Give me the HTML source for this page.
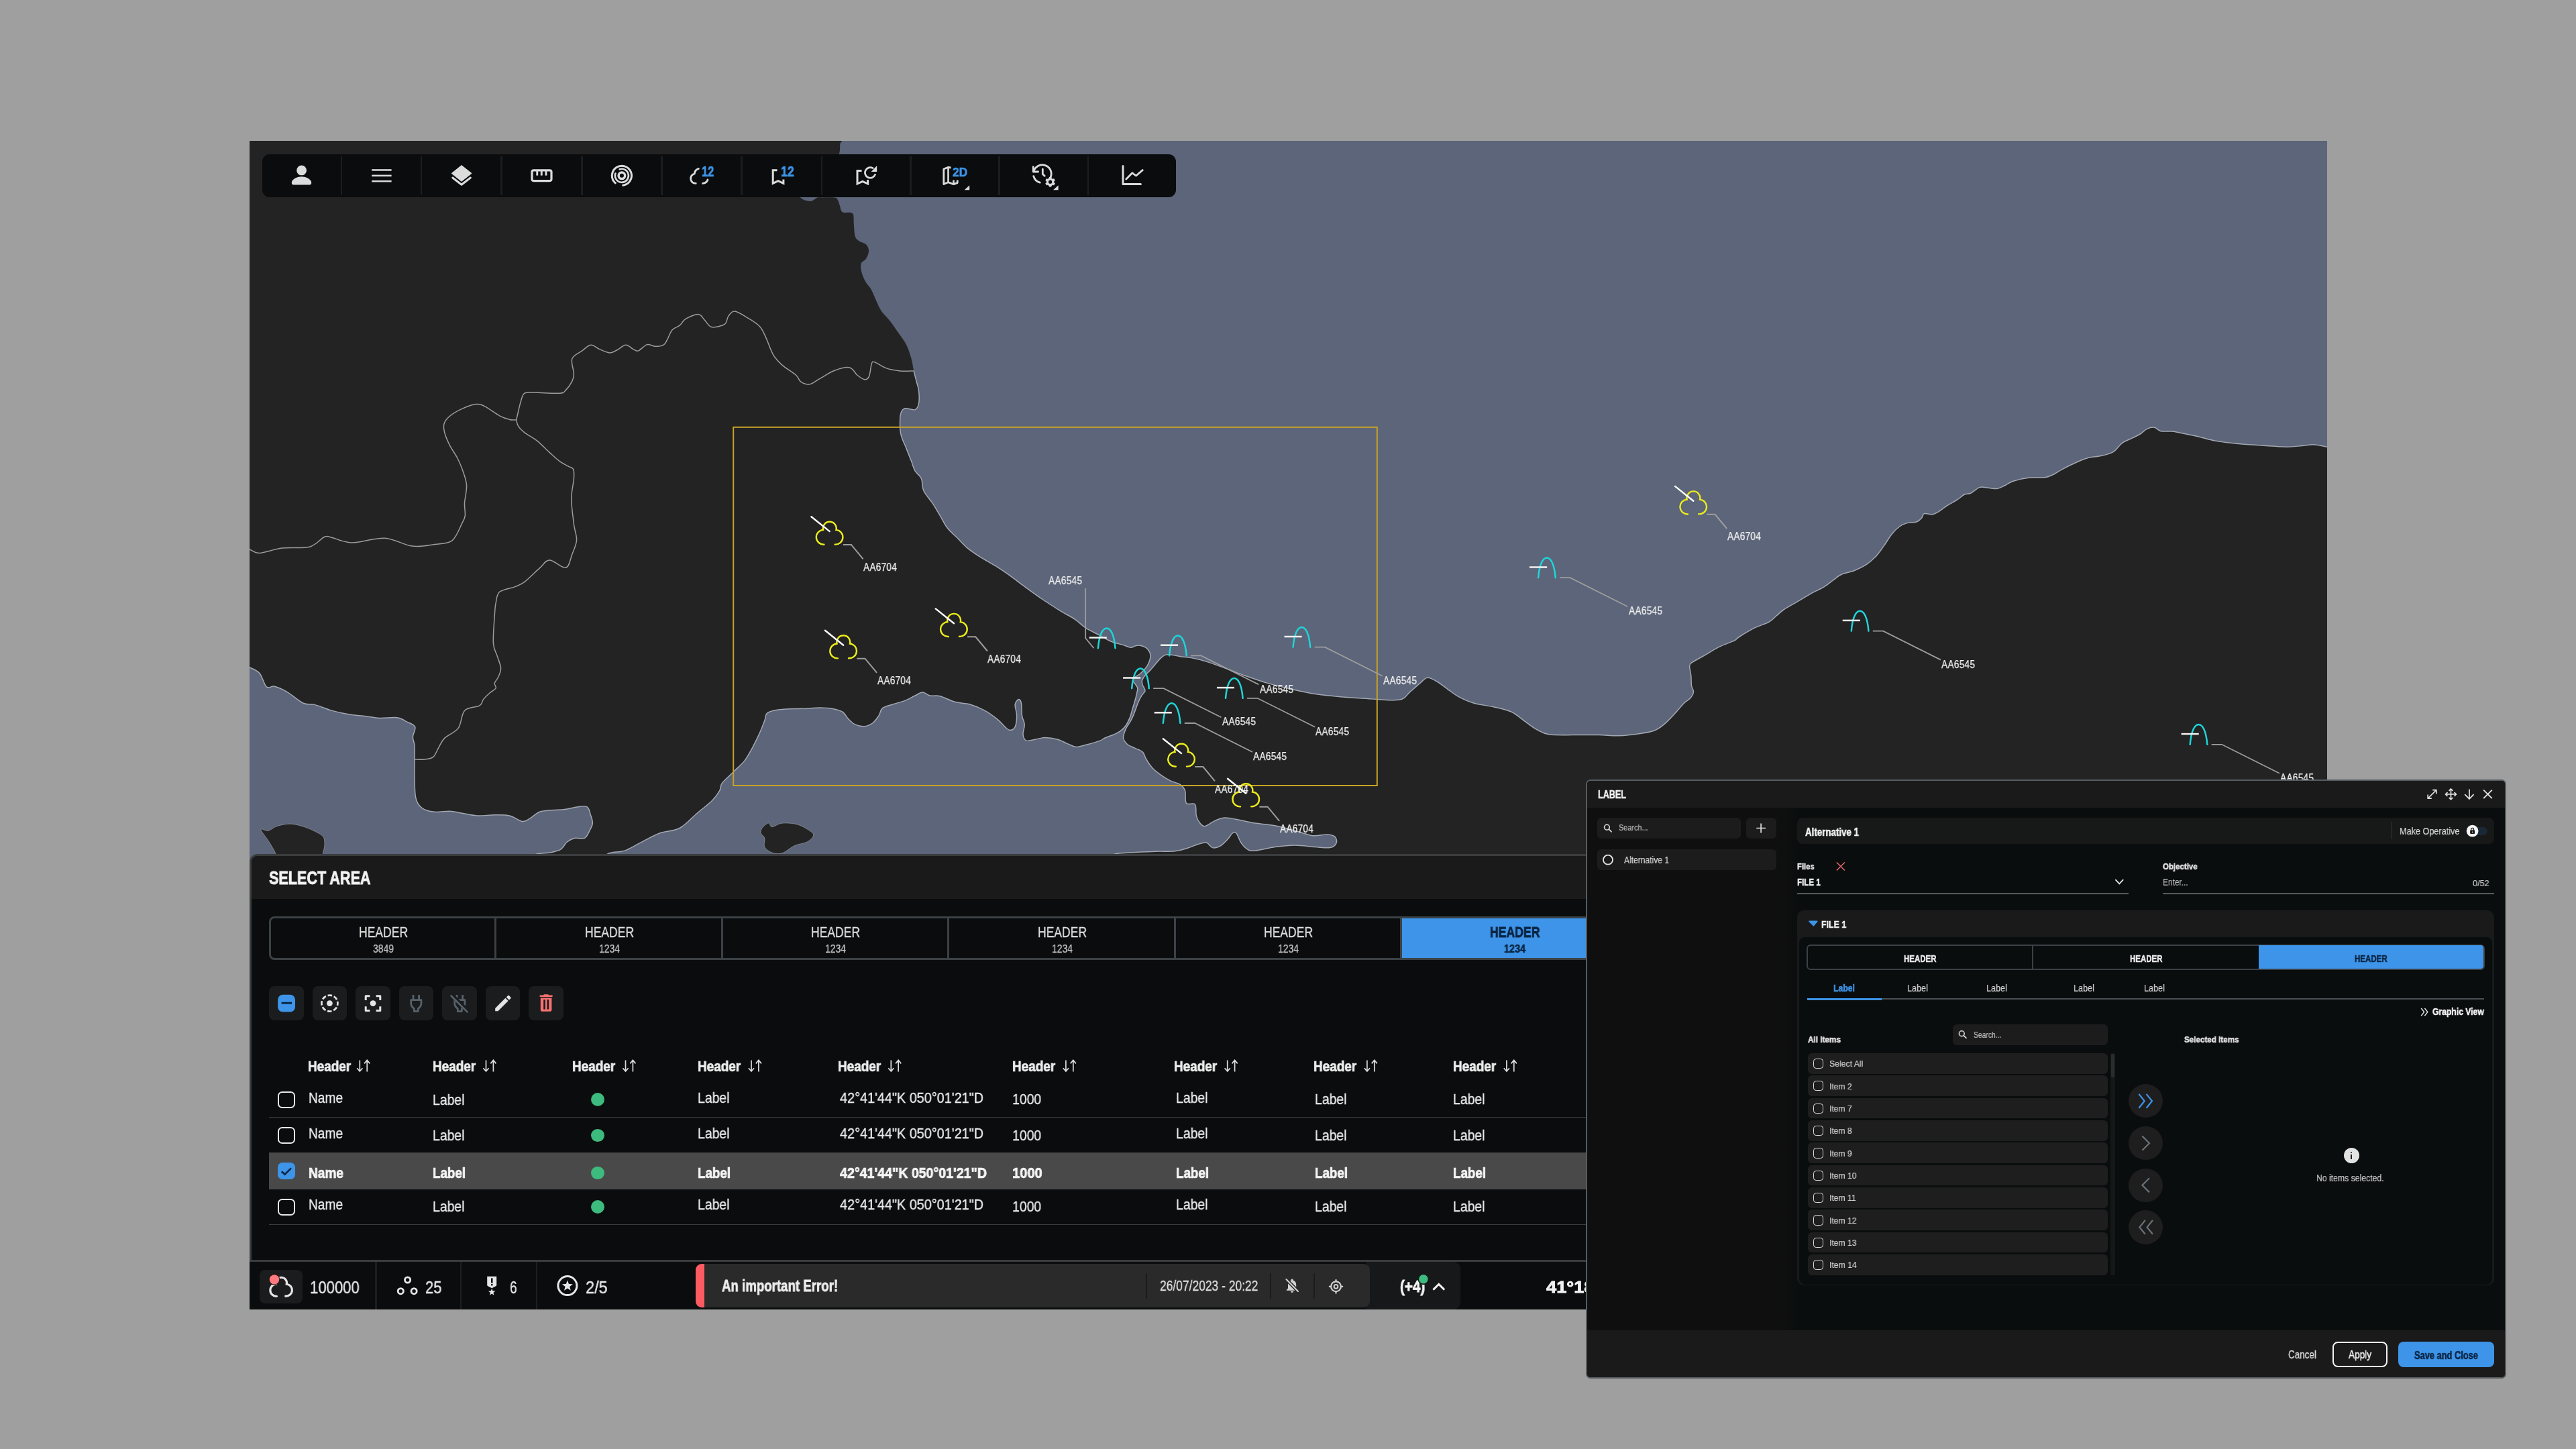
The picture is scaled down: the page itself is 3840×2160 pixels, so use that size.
<!DOCTYPE html>
<html><head><meta charset="utf-8"><title>Select Area</title>
<style>
html,body{margin:0;padding:0;}
body{width:3840px;height:2160px;background:#9f9f9f;position:relative;overflow:hidden;
font-family:"Liberation Sans",sans-serif;}
.b{position:absolute;box-sizing:border-box;display:block;}
.t{position:absolute;white-space:nowrap;transform-origin:0 50%;display:block;will-change:transform;}
#frame{position:absolute;left:372px;top:210px;width:3097px;height:1741.5px;overflow:hidden;background:#232323;}
#frame>.in{position:absolute;left:-372px;top:-210px;width:3840px;height:2160px;}
</style></head><body>
<div id="frame"><div class="in">
<svg class="b" style="left:372.0px;top:210.0px;" width="3097.0" height="1741.5" viewBox="372 210 3097 1741.5"><path d="M1261.5,207.0C1260.1,208.0 1254.7,209.4 1252.9,213.0C1251.2,216.6 1253.1,221.1 1251.1,228.6C1249.1,236.2 1248.3,249.8 1241.0,258.5C1233.7,267.1 1215.8,275.7 1207.5,280.8C1199.1,285.9 1192.8,286.5 1190.7,289.0C1188.6,291.5 1192.9,294.0 1194.8,295.7C1196.6,297.4 1199.4,298.4 1201.9,299.1C1204.3,299.8 1207.1,300.2 1209.3,299.8C1211.5,299.5 1213.4,297.7 1214.9,296.8C1216.5,296.0 1216.8,295.0 1218.6,294.6C1220.5,294.2 1221.9,294.4 1226.1,294.4C1230.3,294.4 1240.2,294.0 1244.0,294.6C1247.8,295.2 1247.5,296.0 1248.8,298.0C1250.1,299.9 1250.6,303.1 1251.8,306.2C1253.0,309.2 1252.7,314.2 1255.9,316.2C1259.1,318.2 1268.0,315.3 1270.8,318.1C1273.6,320.9 1272.1,327.4 1272.7,333.0C1273.3,338.6 1273.3,347.3 1274.5,351.6C1275.8,356.0 1277.3,356.9 1280.1,359.1C1282.9,361.3 1288.8,362.2 1291.3,364.7C1293.8,367.2 1295.0,370.6 1295.0,374.0C1295.0,377.4 1293.2,382.1 1291.3,385.2C1289.5,388.3 1285.1,389.5 1283.9,392.6C1282.6,395.7 1282.9,399.5 1283.9,403.8C1284.8,408.2 1287.0,414.1 1289.5,418.7C1291.9,423.4 1296.0,426.8 1298.8,431.8C1301.6,436.7 1303.7,443.3 1306.2,448.5C1308.7,453.8 1310.3,458.5 1313.7,463.4C1317.1,468.4 1322.4,472.8 1326.7,478.4C1331.1,483.9 1335.7,491.1 1339.8,497.0C1343.8,502.9 1347.8,507.6 1351.0,513.8C1354.1,520.0 1356.5,527.7 1358.4,534.3C1360.3,540.8 1360.9,547.3 1362.1,552.9C1363.4,558.5 1364.6,562.8 1365.9,567.8C1367.1,572.8 1369.0,577.1 1369.6,582.7C1370.2,588.3 1370.5,596.7 1369.6,601.4C1368.7,606.0 1367.4,609.4 1364.0,610.7C1360.6,611.9 1352.6,607.9 1349.1,608.8C1345.5,609.7 1344.0,611.9 1342.8,616.3C1341.5,620.6 1341.5,629.3 1341.6,634.9C1341.8,640.5 1341.9,644.2 1343.5,649.8C1345.0,655.4 1348.5,662.2 1351.0,668.4C1353.4,674.7 1356.2,681.5 1358.4,687.1C1360.6,692.7 1361.5,697.6 1364.0,702.0C1366.5,706.3 1371.1,708.2 1373.3,713.2C1375.5,718.1 1374.2,725.7 1377.0,731.8C1379.8,738.0 1386.0,743.9 1390.1,750.1C1394.1,756.2 1397.5,762.4 1401.3,768.6C1405.0,774.8 1408.1,781.7 1412.4,787.3C1416.8,792.9 1422.4,797.2 1427.4,802.2C1432.3,807.1 1436.7,812.4 1442.3,817.1C1447.9,821.7 1454.1,825.8 1460.9,830.1C1467.7,834.5 1475.8,838.5 1483.3,843.2C1490.7,847.8 1498.2,852.8 1505.6,858.1C1513.1,863.4 1519.9,869.0 1528.0,874.9C1536.1,880.8 1545.4,887.6 1554.1,893.5C1562.8,899.4 1572.1,905.3 1580.2,910.3C1588.2,915.2 1596.1,919.0 1602.5,923.3C1608.9,927.6 1612.8,932.4 1618.6,936.1C1624.4,939.9 1631.1,942.8 1637.3,946.1C1643.5,949.4 1649.7,953.4 1655.9,956.0C1662.1,958.6 1669.6,960.1 1674.5,961.6C1679.5,963.2 1682.8,965.1 1685.7,965.3C1688.6,965.5 1689.6,963.4 1691.9,962.9C1694.2,962.3 1696.7,961.8 1699.4,962.2C1702.1,962.7 1705.7,963.7 1708.1,965.3C1710.5,967.0 1712.5,969.8 1713.7,972.2C1714.8,974.6 1715.2,976.7 1714.9,979.6C1714.6,982.5 1713.1,986.7 1711.8,989.6C1710.5,992.5 1708.9,994.5 1706.8,997.0C1704.8,999.5 1701.9,1002.4 1699.4,1004.5C1696.9,1006.5 1693.7,1007.8 1691.9,1009.4C1690.2,1011.1 1688.8,1012.8 1688.8,1014.4C1688.8,1016.1 1690.8,1017.5 1691.9,1019.4C1693.1,1021.2 1695.2,1023.1 1695.7,1025.6C1696.1,1028.1 1695.0,1031.2 1694.4,1034.3C1693.8,1037.4 1693.0,1040.5 1691.9,1044.2C1690.9,1048.0 1689.4,1052.5 1688.2,1056.6C1687.0,1060.8 1686.1,1064.9 1684.5,1069.1C1682.8,1073.2 1680.7,1078.0 1678.3,1081.5C1675.8,1085.0 1672.7,1087.9 1669.6,1090.2C1666.5,1092.5 1663.4,1093.5 1659.6,1095.2C1655.9,1096.8 1650.5,1098.5 1647.2,1100.0C1643.9,1101.5 1644.1,1102.5 1639.8,1104.1C1635.5,1105.7 1627.1,1108.1 1621.2,1109.7C1615.3,1111.2 1609.4,1113.6 1604.4,1113.4C1599.4,1113.2 1596.0,1110.4 1591.4,1108.6C1586.7,1106.7 1582.0,1103.7 1576.4,1102.2C1570.9,1100.7 1563.4,1099.6 1557.8,1099.6C1552.2,1099.6 1547.6,1101.5 1542.9,1102.2C1538.2,1103.0 1532.8,1105.3 1529.9,1104.1C1526.9,1102.8 1525.4,1098.8 1525.0,1094.8C1524.6,1090.7 1527.5,1084.5 1527.2,1079.9C1527.0,1075.2 1524.3,1072.1 1523.5,1066.8C1522.7,1061.5 1523.2,1052.2 1522.4,1048.2C1521.6,1044.1 1520.2,1042.3 1518.7,1042.6C1517.1,1042.9 1513.6,1046.0 1513.1,1050.0C1512.6,1054.1 1515.7,1061.2 1515.7,1066.8C1515.7,1072.4 1514.8,1080.0 1513.1,1083.6C1511.4,1087.2 1508.1,1088.4 1505.6,1088.4C1503.1,1088.4 1501.3,1086.3 1498.2,1083.6C1495.1,1080.9 1492.0,1076.4 1487.0,1072.4C1482.0,1068.4 1475.2,1063.1 1468.4,1059.4C1461.5,1055.6 1453.4,1052.2 1446.0,1050.0C1438.5,1047.9 1431.1,1048.4 1423.6,1046.3C1416.2,1044.3 1407.5,1039.3 1401.3,1037.7C1395.1,1036.2 1390.7,1037.9 1386.4,1037.0C1382.0,1036.1 1378.9,1032.1 1375.2,1032.1C1371.4,1032.1 1368.3,1034.9 1364.0,1037.0C1359.6,1039.0 1354.7,1042.3 1349.1,1044.4C1343.5,1046.6 1336.0,1048.2 1330.5,1050.0C1324.9,1051.9 1319.0,1052.8 1315.5,1055.6C1312.1,1058.4 1312.4,1063.1 1310.0,1066.8C1307.5,1070.5 1304.4,1075.3 1300.6,1078.0C1296.9,1080.7 1291.9,1082.5 1287.6,1082.8C1283.2,1083.1 1278.3,1081.6 1274.5,1079.9C1270.8,1078.1 1268.3,1075.5 1265.2,1072.4C1262.1,1069.3 1259.9,1063.9 1255.9,1061.2C1251.9,1058.5 1246.6,1057.4 1241.0,1056.4C1235.4,1055.3 1229.2,1054.9 1222.4,1054.9C1215.5,1054.9 1205.1,1056.1 1200.0,1056.4C1194.9,1056.6 1198.9,1056.1 1192.0,1056.4C1185.0,1056.7 1166.5,1057.1 1158.4,1058.2C1150.4,1059.4 1146.6,1060.4 1143.5,1063.1C1140.4,1065.8 1141.7,1069.3 1139.8,1074.3C1137.9,1079.2 1135.4,1086.1 1132.3,1092.9C1129.2,1099.7 1124.9,1108.4 1121.2,1115.3C1117.4,1122.1 1114.6,1128.0 1110.0,1133.9C1105.3,1139.8 1098.8,1145.1 1093.2,1150.7C1087.6,1156.3 1079.9,1162.8 1076.4,1167.4C1073.0,1172.1 1075.2,1174.3 1072.7,1178.6C1070.2,1183.0 1067.1,1187.9 1061.5,1193.5C1055.9,1199.1 1047.2,1205.3 1039.2,1212.2C1031.1,1219.0 1022.4,1229.6 1013.1,1234.5C1003.8,1239.5 993.2,1238.3 983.3,1242.0C973.3,1245.7 962.1,1252.5 953.4,1256.9C944.7,1261.2 938.5,1265.6 931.1,1268.1C923.6,1270.6 914.9,1269.6 908.7,1271.8C902.5,1274.0 896.3,1279.6 893.8,1281.1 L893.8,1320 L1647.3,1320 L1647.3,1281.1C1649.7,1279.8 1656.0,1274.6 1662.2,1272.9C1668.4,1271.2 1674.6,1271.7 1684.5,1271.1C1694.5,1270.4 1710.6,1269.6 1721.8,1269.2C1733.0,1268.8 1743.5,1269.6 1751.6,1268.8C1759.7,1268.0 1764.7,1266.0 1770.3,1264.3C1775.8,1262.7 1780.5,1260.1 1785.2,1258.8C1789.8,1257.4 1794.5,1255.3 1798.2,1256.1C1801.9,1257.0 1804.1,1262.7 1807.5,1263.6C1810.9,1264.5 1815.0,1263.4 1818.7,1261.4C1822.4,1259.3 1826.8,1254.5 1829.9,1251.3C1833.0,1248.1 1835.2,1243.5 1837.3,1242.0C1839.5,1240.4 1840.8,1239.5 1842.9,1242.0C1845.1,1244.5 1847.6,1252.9 1850.4,1256.9C1853.2,1260.9 1856.3,1264.3 1859.7,1266.2C1863.1,1268.1 1864.1,1268.7 1870.9,1268.1C1877.7,1267.5 1890.8,1263.9 1900.7,1262.5C1910.6,1261.1 1920.6,1259.9 1930.5,1259.9C1940.5,1259.9 1951.6,1261.9 1960.3,1262.5C1969.0,1263.1 1977.4,1264.5 1982.7,1263.6C1988.0,1262.7 1990.8,1259.6 1992.0,1256.9C1993.3,1254.2 1992.3,1249.8 1990.2,1247.6C1988.0,1245.4 1984.6,1244.2 1979.0,1243.9C1973.4,1243.5 1964.7,1246.6 1956.6,1245.7C1948.5,1244.8 1939.8,1240.7 1930.5,1238.3C1921.2,1235.8 1910.6,1232.7 1900.7,1230.8C1890.8,1228.9 1879.6,1228.4 1870.9,1227.1C1862.2,1225.7 1856.0,1224.0 1848.5,1222.6C1841.1,1221.2 1832.4,1218.8 1826.2,1218.9C1820.0,1219.0 1816.2,1221.2 1811.3,1223.4C1806.3,1225.5 1800.1,1230.9 1796.3,1231.6C1792.6,1232.2 1791.1,1229.7 1788.9,1227.1C1786.7,1224.5 1784.5,1220.6 1783.3,1215.9C1782.1,1211.2 1783.9,1202.2 1781.4,1199.1C1779.0,1196.0 1770.9,1200.7 1768.4,1197.3C1765.9,1193.8 1768.1,1183.3 1766.5,1178.6C1765.0,1174.0 1762.8,1171.8 1759.1,1169.3C1755.3,1166.8 1749.1,1166.2 1744.2,1163.7C1739.2,1161.2 1733.6,1157.5 1729.3,1154.4C1724.9,1151.3 1721.5,1148.8 1718.1,1145.1C1714.7,1141.4 1711.2,1136.1 1708.8,1132.0C1706.3,1128.0 1706.0,1123.6 1703.2,1120.9C1700.4,1118.1 1695.7,1117.1 1692.0,1115.3C1688.3,1113.4 1683.7,1112.2 1680.8,1109.7C1677.9,1107.1 1675.0,1103.9 1674.5,1100.0C1674.1,1096.1 1676.6,1090.4 1678.3,1086.5C1679.9,1082.5 1682.6,1079.8 1684.5,1076.5C1686.3,1073.2 1688.0,1069.9 1689.4,1066.6C1690.9,1063.3 1691.9,1060.0 1693.2,1056.6C1694.4,1053.3 1695.4,1050.0 1696.9,1046.7C1698.3,1043.4 1700.2,1039.5 1701.9,1036.8C1703.5,1034.1 1706.2,1032.4 1706.8,1030.6C1707.5,1028.7 1706.2,1027.2 1705.6,1025.6C1705.0,1023.9 1703.6,1022.5 1703.1,1020.6C1702.6,1018.8 1701.9,1016.7 1702.5,1014.4C1703.1,1012.1 1704.9,1009.4 1706.8,1007.0C1708.8,1004.5 1711.8,1002.2 1714.3,999.5C1716.8,996.8 1719.3,993.7 1721.7,990.8C1724.2,987.9 1726.9,984.4 1729.2,982.1C1731.5,979.8 1733.1,978.2 1735.4,977.1C1737.7,976.1 1738.5,975.3 1742.9,975.7C1747.2,976.0 1756.3,978.2 1761.5,979.0C1766.7,979.8 1768.2,979.2 1774.0,980.3C1779.8,981.4 1787.7,982.9 1796.3,985.6C1805.0,988.2 1816.2,992.4 1826.2,996.0C1836.1,999.6 1845.4,1003.4 1856.0,1007.2C1866.5,1010.9 1877.7,1014.9 1889.5,1018.4C1901.3,1021.8 1914.4,1024.9 1926.8,1027.7C1939.2,1030.5 1951.6,1033.3 1964.1,1035.1C1976.5,1037.0 1988.9,1037.8 2001.3,1038.9C2013.8,1039.9 2024.6,1040.7 2038.6,1041.5C2052.6,1042.2 2074.6,1045.0 2085.2,1043.3C2095.8,1041.7 2096.7,1035.6 2102.0,1031.4C2107.3,1027.2 2112.5,1021.9 2116.9,1018.4C2121.2,1014.8 2123.7,1010.5 2128.1,1010.2C2132.4,1009.8 2137.7,1013.4 2143.0,1016.5C2148.3,1019.6 2154.7,1025.1 2160.0,1028.9C2165.3,1032.6 2168.7,1035.7 2174.9,1038.9C2181.1,1042.2 2188.6,1045.8 2197.3,1048.3C2206.0,1050.7 2217.8,1051.7 2227.1,1053.9C2236.4,1056.0 2245.7,1057.9 2253.2,1061.3C2260.6,1064.7 2265.6,1070.0 2271.8,1074.3C2278.0,1078.7 2284.2,1084.0 2290.5,1087.4C2296.7,1090.8 2299.8,1093.5 2309.1,1094.8C2318.4,1096.2 2333.9,1095.5 2346.4,1095.6C2358.8,1095.7 2372.4,1095.4 2383.6,1095.6C2394.8,1095.8 2403.5,1097.0 2413.4,1096.7C2423.4,1096.4 2434.6,1095.0 2443.3,1093.7C2452.0,1092.5 2459.4,1091.6 2465.6,1089.3C2471.8,1087.0 2475.6,1084.0 2480.5,1079.9C2485.5,1075.9 2490.5,1070.3 2495.4,1065.0C2500.4,1059.8 2506.3,1052.3 2510.4,1048.3C2514.4,1044.2 2517.3,1043.6 2519.7,1040.8C2522.0,1038.0 2524.2,1034.6 2524.5,1031.5C2524.8,1028.4 2522.2,1026.2 2521.5,1022.2C2520.9,1018.1 2521.3,1012.2 2520.8,1007.3C2520.3,1002.3 2518.1,995.8 2518.6,992.4C2519.0,988.9 2519.8,989.2 2523.4,986.8C2527.0,984.3 2533.6,981.2 2540.2,977.4C2546.7,973.7 2555.1,968.1 2562.5,964.4C2570.0,960.7 2579.9,957.6 2584.9,955.1C2589.9,952.6 2587.4,952.6 2592.4,949.5C2597.3,946.4 2607.3,940.2 2614.7,936.4C2622.2,932.7 2631.5,930.2 2637.1,927.1C2642.7,924.0 2644.5,920.9 2648.3,917.8C2652.0,914.7 2653.9,912.2 2659.4,908.5C2665.0,904.8 2675.0,899.5 2681.8,895.4C2688.6,891.4 2694.2,887.7 2700.4,884.3C2706.7,880.8 2713.5,878.4 2719.1,874.9C2724.7,871.5 2729.6,866.9 2734.0,863.8C2738.3,860.7 2740.2,858.5 2745.2,856.3C2750.1,854.1 2757.6,853.2 2763.8,850.7C2770.0,848.2 2776.8,845.1 2782.4,841.4C2788.0,837.7 2793.0,833.0 2797.3,828.4C2801.7,823.7 2804.8,818.7 2808.5,813.4C2812.3,808.2 2816.0,801.3 2819.7,796.7C2823.4,792.0 2827.2,788.3 2830.9,785.5C2834.6,782.7 2837.7,781.1 2842.1,779.9C2846.4,778.7 2853.3,779.3 2857.0,778.0C2860.7,776.8 2862.6,774.5 2864.4,772.4C2866.3,770.4 2865.6,766.7 2868.2,765.7C2870.8,764.8 2876.8,767.1 2880.0,766.9C2883.2,766.6 2883.7,766.4 2887.5,764.2C2891.2,762.1 2897.4,757.0 2902.4,753.8C2907.3,750.6 2912.9,748.0 2917.3,745.2C2921.6,742.4 2925.0,738.7 2928.5,737.0C2931.9,735.4 2934.0,736.9 2937.8,735.2C2941.5,733.4 2946.8,728.0 2950.8,726.6C2954.9,725.2 2957.6,726.7 2962.0,727.0C2966.3,727.3 2972.6,729.0 2976.9,728.5C2981.3,728.0 2984.1,725.9 2988.1,724.0C2992.1,722.1 2994.9,719.3 3001.1,717.3C3007.3,715.3 3017.6,713.0 3025.4,712.1C3033.1,711.1 3042.1,712.3 3047.7,711.7C3053.3,711.1 3054.6,710.3 3058.9,708.3C3063.3,706.4 3068.2,702.8 3073.8,699.8C3079.4,696.8 3086.2,693.2 3092.4,690.5C3098.7,687.7 3104.3,684.9 3111.1,683.0C3117.9,681.1 3126.9,680.8 3133.4,679.3C3140.0,677.7 3145.3,676.8 3150.2,673.7C3155.2,670.6 3158.6,664.1 3163.3,660.6C3167.9,657.2 3173.5,655.5 3178.2,653.2C3182.8,650.8 3187.5,648.8 3191.2,646.5C3194.9,644.2 3197.1,640.9 3200.5,639.4C3204.0,637.8 3208.3,636.6 3211.7,637.2C3215.1,637.7 3216.7,641.7 3221.0,642.7C3225.4,643.7 3231.9,642.5 3237.8,643.1C3243.7,643.7 3249.6,645.1 3256.4,646.5C3263.3,647.8 3271.4,649.6 3278.8,651.3C3286.3,653.1 3293.1,655.4 3301.2,656.9C3309.2,658.5 3316.7,659.5 3327.3,660.6C3337.8,661.8 3350.9,662.7 3364.5,663.6C3378.2,664.5 3398.1,666.1 3409.3,666.2C3420.4,666.3 3424.8,664.9 3431.6,664.4C3438.5,663.8 3444.0,662.6 3450.3,662.9C3456.5,663.2 3463.9,665.4 3468.9,666.2C3473.9,667.1 3478.2,667.8 3480.1,668.1 L3490,668.1 L3490,190 L1261.5,190 Z" fill="#5c6579"/><path d="M364.5,992.3C365.8,992.7 368.3,993.0 372.0,994.9C375.7,996.7 382.7,998.6 386.9,1003.4C391.1,1008.3 393.6,1020.7 397.3,1023.9C401.1,1027.2 404.2,1022.0 409.3,1023.2C414.4,1024.4 420.8,1027.2 427.9,1031.4C435.1,1035.6 445.3,1045.0 452.1,1048.2C459.0,1051.3 461.8,1048.5 468.9,1050.4C476.1,1052.3 486.3,1056.9 495.0,1059.4C503.7,1061.8 512.4,1063.5 521.1,1064.9C529.8,1066.4 539.7,1067.0 547.2,1067.9C554.6,1068.9 558.4,1070.2 565.8,1070.5C573.3,1070.8 585.1,1068.9 591.9,1069.8C598.7,1070.7 602.3,1073.8 606.8,1076.1C611.3,1078.4 617.3,1079.9 618.7,1083.6C620.2,1087.3 615.5,1093.8 615.4,1098.5C615.3,1103.1 617.6,1105.9 618.0,1111.5C618.4,1117.1 618.0,1124.0 618.0,1132.0C618.0,1140.1 617.7,1150.4 618.0,1160.0C618.3,1169.6 618.0,1182.4 619.9,1189.8C621.7,1197.3 624.5,1201.3 629.2,1204.7C633.8,1208.1 641.0,1209.6 647.8,1210.3C654.6,1211.1 663.3,1208.9 670.2,1209.2C677.0,1209.5 682.0,1211.1 688.8,1212.2C695.6,1213.3 703.1,1215.5 711.2,1215.9C719.2,1216.3 729.2,1214.8 737.3,1214.8C745.3,1214.8 752.8,1214.3 759.6,1215.9C766.5,1217.5 773.3,1223.7 778.3,1224.5C783.2,1225.2 785.1,1222.7 789.4,1220.4C793.8,1218.0 798.8,1212.4 804.4,1210.3C809.9,1208.2 816.8,1208.3 823.0,1207.7C829.2,1207.1 835.4,1207.4 841.6,1206.6C847.8,1205.8 854.7,1203.5 860.3,1202.9C865.9,1202.2 871.8,1200.7 875.2,1202.9C878.6,1205.0 879.4,1211.9 880.8,1215.9C882.1,1219.9 883.7,1223.4 883.4,1227.1C883.1,1230.8 880.9,1234.5 878.9,1238.3C876.9,1242.0 875.2,1247.6 871.4,1249.4C867.7,1251.3 860.9,1248.5 856.5,1249.4C852.2,1250.4 848.8,1252.2 845.4,1255.0C841.9,1257.8 840.4,1263.5 836.0,1266.2C831.7,1268.9 825.2,1269.9 819.3,1271.1C813.4,1272.2 806.8,1271.2 800.6,1272.9C794.4,1274.6 785.1,1279.8 782.0,1281.1 L782.0,1320 L350,1320 Z" fill="#5c6579"/><path d="M388.8,1236.4C388.8,1233.9 395.9,1239.1 400.0,1238.3C404.0,1237.5 407.7,1233.2 413.0,1231.6C418.3,1229.9 425.4,1228.2 431.6,1228.2C437.8,1228.2 444.1,1229.7 450.3,1231.6C456.5,1233.4 463.6,1236.3 468.9,1239.0C474.2,1241.7 479.5,1244.0 482.0,1247.6C484.4,1251.2 483.9,1256.4 483.8,1260.6C483.7,1264.8 481.8,1268.6 481.2,1272.9C480.6,1277.3 491.5,1284.4 480.1,1286.7C468.7,1289.0 424.5,1289.0 413.0,1286.7C401.5,1284.4 413.3,1278.5 411.1,1272.9C409.0,1267.3 403.7,1259.3 400.0,1253.2C396.2,1247.1 388.8,1238.9 388.8,1236.4Z" fill="#232323" stroke="#a2a8b3" stroke-width="0.6"/><path d="M1136.1,1234.5C1137.9,1232.0 1142.9,1227.4 1145.4,1227.1C1147.9,1226.8 1147.6,1232.7 1151.0,1232.7C1154.4,1232.7 1159.7,1227.7 1165.9,1227.1C1172.1,1226.5 1181.4,1227.1 1188.3,1228.9C1195.1,1230.8 1202.8,1235.5 1206.9,1238.3C1210.9,1241.1 1213.1,1242.9 1212.5,1245.7C1211.9,1248.5 1207.8,1252.5 1203.2,1255.0C1198.5,1257.5 1190.7,1257.8 1184.5,1260.6C1178.3,1263.4 1171.5,1270.1 1165.9,1271.8C1160.3,1273.5 1155.3,1272.6 1151.0,1271.1C1146.6,1269.5 1141.7,1266.1 1139.8,1262.5C1137.9,1258.9 1140.7,1252.9 1139.8,1249.4C1138.9,1246.0 1134.8,1244.5 1134.2,1242.0C1133.6,1239.5 1134.2,1237.0 1136.1,1234.5Z" fill="#232323" stroke="#a2a8b3" stroke-width="0.6"/><path d="M1362.1,552.9C1362.8,555.4 1364.6,562.8 1365.9,567.8C1367.1,572.8 1369.0,577.1 1369.6,582.7C1370.2,588.3 1370.5,596.7 1369.6,601.4C1368.7,606.0 1367.4,609.4 1364.0,610.7C1360.6,611.9 1352.6,607.9 1349.1,608.8C1345.5,609.7 1344.0,611.9 1342.8,616.3C1341.5,620.6 1341.5,629.3 1341.6,634.9C1341.8,640.5 1341.9,644.2 1343.5,649.8C1345.0,655.4 1348.5,662.2 1351.0,668.4C1353.4,674.7 1356.2,681.5 1358.4,687.1C1360.6,692.7 1361.5,697.6 1364.0,702.0C1366.5,706.3 1371.1,708.2 1373.3,713.2C1375.5,718.1 1374.2,725.7 1377.0,731.8C1379.8,738.0 1386.0,743.9 1390.1,750.1C1394.1,756.2 1397.5,762.4 1401.3,768.6C1405.0,774.8 1408.1,781.7 1412.4,787.3C1416.8,792.9 1422.4,797.2 1427.4,802.2C1432.3,807.1 1436.7,812.4 1442.3,817.1C1447.9,821.7 1454.1,825.8 1460.9,830.1C1467.7,834.5 1475.8,838.5 1483.3,843.2C1490.7,847.8 1498.2,852.8 1505.6,858.1C1513.1,863.4 1519.9,869.0 1528.0,874.9C1536.1,880.8 1545.4,887.6 1554.1,893.5C1562.8,899.4 1572.1,905.3 1580.2,910.3C1588.2,915.2 1596.1,919.0 1602.5,923.3C1608.9,927.6 1612.8,932.4 1618.6,936.1C1624.4,939.9 1631.1,942.8 1637.3,946.1C1643.5,949.4 1649.7,953.4 1655.9,956.0C1662.1,958.6 1669.6,960.1 1674.5,961.6C1679.5,963.2 1682.8,965.1 1685.7,965.3C1688.6,965.5 1689.6,963.4 1691.9,962.9C1694.2,962.3 1696.7,961.8 1699.4,962.2C1702.1,962.7 1705.7,963.7 1708.1,965.3C1710.5,967.0 1712.5,969.8 1713.7,972.2C1714.8,974.6 1715.2,976.7 1714.9,979.6C1714.6,982.5 1713.1,986.7 1711.8,989.6C1710.5,992.5 1708.9,994.5 1706.8,997.0C1704.8,999.5 1701.9,1002.4 1699.4,1004.5C1696.9,1006.5 1693.7,1007.8 1691.9,1009.4C1690.2,1011.1 1688.8,1012.8 1688.8,1014.4C1688.8,1016.1 1690.8,1017.5 1691.9,1019.4C1693.1,1021.2 1695.2,1023.1 1695.7,1025.6C1696.1,1028.1 1695.0,1031.2 1694.4,1034.3C1693.8,1037.4 1693.0,1040.5 1691.9,1044.2C1690.9,1048.0 1689.4,1052.5 1688.2,1056.6C1687.0,1060.8 1686.1,1064.9 1684.5,1069.1C1682.8,1073.2 1680.7,1078.0 1678.3,1081.5C1675.8,1085.0 1672.7,1087.9 1669.6,1090.2C1666.5,1092.5 1663.4,1093.5 1659.6,1095.2C1655.9,1096.8 1650.5,1098.5 1647.2,1100.0C1643.9,1101.5 1644.1,1102.5 1639.8,1104.1C1635.5,1105.7 1627.1,1108.1 1621.2,1109.7C1615.3,1111.2 1609.4,1113.6 1604.4,1113.4C1599.4,1113.2 1596.0,1110.4 1591.4,1108.6C1586.7,1106.7 1582.0,1103.7 1576.4,1102.2C1570.9,1100.7 1563.4,1099.6 1557.8,1099.6C1552.2,1099.6 1547.6,1101.5 1542.9,1102.2C1538.2,1103.0 1532.8,1105.3 1529.9,1104.1C1526.9,1102.8 1525.4,1098.8 1525.0,1094.8C1524.6,1090.7 1527.5,1084.5 1527.2,1079.9C1527.0,1075.2 1524.3,1072.1 1523.5,1066.8C1522.7,1061.5 1523.2,1052.2 1522.4,1048.2C1521.6,1044.1 1520.2,1042.3 1518.7,1042.6C1517.1,1042.9 1513.6,1046.0 1513.1,1050.0C1512.6,1054.1 1515.7,1061.2 1515.7,1066.8C1515.7,1072.4 1514.8,1080.0 1513.1,1083.6C1511.4,1087.2 1508.1,1088.4 1505.6,1088.4C1503.1,1088.4 1501.3,1086.3 1498.2,1083.6C1495.1,1080.9 1492.0,1076.4 1487.0,1072.4C1482.0,1068.4 1475.2,1063.1 1468.4,1059.4C1461.5,1055.6 1453.4,1052.2 1446.0,1050.0C1438.5,1047.9 1431.1,1048.4 1423.6,1046.3C1416.2,1044.3 1407.5,1039.3 1401.3,1037.7C1395.1,1036.2 1390.7,1037.9 1386.4,1037.0C1382.0,1036.1 1378.9,1032.1 1375.2,1032.1C1371.4,1032.1 1368.3,1034.9 1364.0,1037.0C1359.6,1039.0 1354.7,1042.3 1349.1,1044.4C1343.5,1046.6 1336.0,1048.2 1330.5,1050.0C1324.9,1051.9 1319.0,1052.8 1315.5,1055.6C1312.1,1058.4 1312.4,1063.1 1310.0,1066.8C1307.5,1070.5 1304.4,1075.3 1300.6,1078.0C1296.9,1080.7 1291.9,1082.5 1287.6,1082.8C1283.2,1083.1 1278.3,1081.6 1274.5,1079.9C1270.8,1078.1 1268.3,1075.5 1265.2,1072.4C1262.1,1069.3 1259.9,1063.9 1255.9,1061.2C1251.9,1058.5 1246.6,1057.4 1241.0,1056.4C1235.4,1055.3 1229.2,1054.9 1222.4,1054.9C1215.5,1054.9 1205.1,1056.1 1200.0,1056.4C1194.9,1056.6 1198.9,1056.1 1192.0,1056.4C1185.0,1056.7 1166.5,1057.1 1158.4,1058.2C1150.4,1059.4 1146.6,1060.4 1143.5,1063.1C1140.4,1065.8 1141.7,1069.3 1139.8,1074.3C1137.9,1079.2 1135.4,1086.1 1132.3,1092.9C1129.2,1099.7 1124.9,1108.4 1121.2,1115.3C1117.4,1122.1 1114.6,1128.0 1110.0,1133.9C1105.3,1139.8 1098.8,1145.1 1093.2,1150.7C1087.6,1156.3 1079.9,1162.8 1076.4,1167.4C1073.0,1172.1 1075.2,1174.3 1072.7,1178.6C1070.2,1183.0 1067.1,1187.9 1061.5,1193.5C1055.9,1199.1 1047.2,1205.3 1039.2,1212.2C1031.1,1219.0 1022.4,1229.6 1013.1,1234.5C1003.8,1239.5 993.2,1238.3 983.3,1242.0C973.3,1245.7 962.1,1252.5 953.4,1256.9C944.7,1261.2 938.5,1265.6 931.1,1268.1C923.6,1270.6 914.9,1269.6 908.7,1271.8C902.5,1274.0 896.3,1279.6 893.8,1281.1" fill="none" stroke="#a2a8b3" stroke-width="1.5"/><path d="M3480.1,668.1C3478.2,667.8 3473.9,667.1 3468.9,666.2C3463.9,665.4 3456.5,663.2 3450.3,662.9C3444.0,662.6 3438.5,663.8 3431.6,664.4C3424.8,664.9 3420.4,666.3 3409.3,666.2C3398.1,666.1 3378.2,664.5 3364.5,663.6C3350.9,662.7 3337.8,661.8 3327.3,660.6C3316.7,659.5 3309.2,658.5 3301.2,656.9C3293.1,655.4 3286.3,653.1 3278.8,651.3C3271.4,649.6 3263.3,647.8 3256.4,646.5C3249.6,645.1 3243.7,643.7 3237.8,643.1C3231.9,642.5 3225.4,643.7 3221.0,642.7C3216.7,641.7 3215.1,637.7 3211.7,637.2C3208.3,636.6 3204.0,637.8 3200.5,639.4C3197.1,640.9 3194.9,644.2 3191.2,646.5C3187.5,648.8 3182.8,650.8 3178.2,653.2C3173.5,655.5 3167.9,657.2 3163.3,660.6C3158.6,664.1 3155.2,670.6 3150.2,673.7C3145.3,676.8 3140.0,677.7 3133.4,679.3C3126.9,680.8 3117.9,681.1 3111.1,683.0C3104.3,684.9 3098.7,687.7 3092.4,690.5C3086.2,693.2 3079.4,696.8 3073.8,699.8C3068.2,702.8 3063.3,706.4 3058.9,708.3C3054.6,710.3 3053.3,711.1 3047.7,711.7C3042.1,712.3 3033.1,711.1 3025.4,712.1C3017.6,713.0 3007.3,715.3 3001.1,717.3C2994.9,719.3 2992.1,722.1 2988.1,724.0C2984.1,725.9 2981.3,728.0 2976.9,728.5C2972.6,729.0 2966.3,727.3 2962.0,727.0C2957.6,726.7 2954.9,725.2 2950.8,726.6C2946.8,728.0 2941.5,733.4 2937.8,735.2C2934.0,736.9 2931.9,735.4 2928.5,737.0C2925.0,738.7 2921.6,742.4 2917.3,745.2C2912.9,748.0 2907.3,750.6 2902.4,753.8C2897.4,757.0 2891.2,762.1 2887.5,764.2C2883.7,766.4 2883.2,766.6 2880.0,766.9C2876.8,767.1 2870.8,764.8 2868.2,765.7C2865.6,766.7 2866.3,770.4 2864.4,772.4C2862.6,774.5 2860.7,776.8 2857.0,778.0C2853.3,779.3 2846.4,778.7 2842.1,779.9C2837.7,781.1 2834.6,782.7 2830.9,785.5C2827.2,788.3 2823.4,792.0 2819.7,796.7C2816.0,801.3 2812.3,808.2 2808.5,813.4C2804.8,818.7 2801.7,823.7 2797.3,828.4C2793.0,833.0 2788.0,837.7 2782.4,841.4C2776.8,845.1 2770.0,848.2 2763.8,850.7C2757.6,853.2 2750.1,854.1 2745.2,856.3C2740.2,858.5 2738.3,860.7 2734.0,863.8C2729.6,866.9 2724.7,871.5 2719.1,874.9C2713.5,878.4 2706.7,880.8 2700.4,884.3C2694.2,887.7 2688.6,891.4 2681.8,895.4C2675.0,899.5 2665.0,904.8 2659.4,908.5C2653.9,912.2 2652.0,914.7 2648.3,917.8C2644.5,920.9 2642.7,924.0 2637.1,927.1C2631.5,930.2 2622.2,932.7 2614.7,936.4C2607.3,940.2 2597.3,946.4 2592.4,949.5C2587.4,952.6 2589.9,952.6 2584.9,955.1C2579.9,957.6 2570.0,960.7 2562.5,964.4C2555.1,968.1 2546.7,973.7 2540.2,977.4C2533.6,981.2 2527.0,984.3 2523.4,986.8C2519.8,989.2 2519.0,988.9 2518.6,992.4C2518.1,995.8 2520.3,1002.3 2520.8,1007.3C2521.3,1012.2 2520.9,1018.1 2521.5,1022.2C2522.2,1026.2 2524.8,1028.4 2524.5,1031.5C2524.2,1034.6 2522.0,1038.0 2519.7,1040.8C2517.3,1043.6 2514.4,1044.2 2510.4,1048.3C2506.3,1052.3 2500.4,1059.8 2495.4,1065.0C2490.5,1070.3 2485.5,1075.9 2480.5,1079.9C2475.6,1084.0 2471.8,1087.0 2465.6,1089.3C2459.4,1091.6 2452.0,1092.5 2443.3,1093.7C2434.6,1095.0 2423.4,1096.4 2413.4,1096.7C2403.5,1097.0 2394.8,1095.8 2383.6,1095.6C2372.4,1095.4 2358.8,1095.7 2346.4,1095.6C2333.9,1095.5 2318.4,1096.2 2309.1,1094.8C2299.8,1093.5 2296.7,1090.8 2290.5,1087.4C2284.2,1084.0 2278.0,1078.7 2271.8,1074.3C2265.6,1070.0 2260.6,1064.7 2253.2,1061.3C2245.7,1057.9 2236.4,1056.0 2227.1,1053.9C2217.8,1051.7 2206.0,1050.7 2197.3,1048.3C2188.6,1045.8 2181.1,1042.2 2174.9,1038.9C2168.7,1035.7 2165.3,1032.6 2160.0,1028.9C2154.7,1025.1 2148.3,1019.6 2143.0,1016.5C2137.7,1013.4 2132.4,1009.8 2128.1,1010.2C2123.7,1010.5 2121.2,1014.8 2116.9,1018.4C2112.5,1021.9 2107.3,1027.2 2102.0,1031.4C2096.7,1035.6 2095.8,1041.7 2085.2,1043.3C2074.6,1045.0 2052.6,1042.2 2038.6,1041.5C2024.6,1040.7 2013.8,1039.9 2001.3,1038.9C1988.9,1037.8 1976.5,1037.0 1964.1,1035.1C1951.6,1033.3 1939.2,1030.5 1926.8,1027.7C1914.4,1024.9 1901.3,1021.8 1889.5,1018.4C1877.7,1014.9 1866.5,1010.9 1856.0,1007.2C1845.4,1003.4 1836.1,999.6 1826.2,996.0C1816.2,992.4 1805.0,988.2 1796.3,985.6C1787.7,982.9 1779.8,981.4 1774.0,980.3C1768.2,979.2 1766.7,979.8 1761.5,979.0C1756.3,978.2 1747.2,976.0 1742.9,975.7C1738.5,975.3 1737.7,976.1 1735.4,977.1C1733.1,978.2 1731.5,979.8 1729.2,982.1C1726.9,984.4 1724.2,987.9 1721.7,990.8C1719.3,993.7 1716.8,996.8 1714.3,999.5C1711.8,1002.2 1708.8,1004.5 1706.8,1007.0C1704.9,1009.4 1703.1,1012.1 1702.5,1014.4C1701.9,1016.7 1702.6,1018.8 1703.1,1020.6C1703.6,1022.5 1705.0,1023.9 1705.6,1025.6C1706.2,1027.2 1707.5,1028.7 1706.8,1030.6C1706.2,1032.4 1703.5,1034.1 1701.9,1036.8C1700.2,1039.5 1698.3,1043.4 1696.9,1046.7C1695.4,1050.0 1694.4,1053.3 1693.2,1056.6C1691.9,1060.0 1690.9,1063.3 1689.4,1066.6C1688.0,1069.9 1686.3,1073.2 1684.5,1076.5C1682.6,1079.8 1679.9,1082.5 1678.3,1086.5C1676.6,1090.4 1674.1,1096.1 1674.5,1100.0C1675.0,1103.9 1677.9,1107.1 1680.8,1109.7C1683.7,1112.2 1688.3,1113.4 1692.0,1115.3C1695.7,1117.1 1700.4,1118.1 1703.2,1120.9C1706.0,1123.6 1706.3,1128.0 1708.8,1132.0C1711.2,1136.1 1714.7,1141.4 1718.1,1145.1C1721.5,1148.8 1724.9,1151.3 1729.3,1154.4C1733.6,1157.5 1739.2,1161.2 1744.2,1163.7C1749.1,1166.2 1755.3,1166.8 1759.1,1169.3C1762.8,1171.8 1765.0,1174.0 1766.5,1178.6C1768.1,1183.3 1765.9,1193.8 1768.4,1197.3C1770.9,1200.7 1779.0,1196.0 1781.4,1199.1C1783.9,1202.2 1782.1,1211.2 1783.3,1215.9C1784.5,1220.6 1786.7,1224.5 1788.9,1227.1C1791.1,1229.7 1792.6,1232.2 1796.3,1231.6C1800.1,1230.9 1806.3,1225.5 1811.3,1223.4C1816.2,1221.2 1820.0,1219.0 1826.2,1218.9C1832.4,1218.8 1841.1,1221.2 1848.5,1222.6C1856.0,1224.0 1862.2,1225.7 1870.9,1227.1C1879.6,1228.4 1890.8,1228.9 1900.7,1230.8C1910.6,1232.7 1921.2,1235.8 1930.5,1238.3C1939.8,1240.7 1948.5,1244.8 1956.6,1245.7C1964.7,1246.6 1973.4,1243.5 1979.0,1243.9C1984.6,1244.2 1988.0,1245.4 1990.2,1247.6C1992.3,1249.8 1993.3,1254.2 1992.0,1256.9C1990.8,1259.6 1988.0,1262.7 1982.7,1263.6C1977.4,1264.5 1969.0,1263.1 1960.3,1262.5C1951.6,1261.9 1940.5,1259.9 1930.5,1259.9C1920.6,1259.9 1910.6,1261.1 1900.7,1262.5C1890.8,1263.9 1877.7,1267.5 1870.9,1268.1C1864.1,1268.7 1863.1,1268.1 1859.7,1266.2C1856.3,1264.3 1853.2,1260.9 1850.4,1256.9C1847.6,1252.9 1845.1,1244.5 1842.9,1242.0C1840.8,1239.5 1839.5,1240.4 1837.3,1242.0C1835.2,1243.5 1833.0,1248.1 1829.9,1251.3C1826.8,1254.5 1822.4,1259.3 1818.7,1261.4C1815.0,1263.4 1810.9,1264.5 1807.5,1263.6C1804.1,1262.7 1801.9,1257.0 1798.2,1256.1C1794.5,1255.3 1789.8,1257.4 1785.2,1258.8C1780.5,1260.1 1775.8,1262.7 1770.3,1264.3C1764.7,1266.0 1759.7,1268.0 1751.6,1268.8C1743.5,1269.6 1733.0,1268.8 1721.8,1269.2C1710.6,1269.6 1694.5,1270.4 1684.5,1271.1C1674.6,1271.7 1668.4,1271.2 1662.2,1272.9C1656.0,1274.6 1649.7,1279.8 1647.3,1281.1" fill="none" stroke="#a2a8b3" stroke-width="1.5"/><path d="M364.5,992.3C365.8,992.7 368.3,993.0 372.0,994.9C375.7,996.7 382.7,998.6 386.9,1003.4C391.1,1008.3 393.6,1020.7 397.3,1023.9C401.1,1027.2 404.2,1022.0 409.3,1023.2C414.4,1024.4 420.8,1027.2 427.9,1031.4C435.1,1035.6 445.3,1045.0 452.1,1048.2C459.0,1051.3 461.8,1048.5 468.9,1050.4C476.1,1052.3 486.3,1056.9 495.0,1059.4C503.7,1061.8 512.4,1063.5 521.1,1064.9C529.8,1066.4 539.7,1067.0 547.2,1067.9C554.6,1068.9 558.4,1070.2 565.8,1070.5C573.3,1070.8 585.1,1068.9 591.9,1069.8C598.7,1070.7 602.3,1073.8 606.8,1076.1C611.3,1078.4 617.3,1079.9 618.7,1083.6C620.2,1087.3 615.5,1093.8 615.4,1098.5C615.3,1103.1 617.6,1105.9 618.0,1111.5C618.4,1117.1 618.0,1124.0 618.0,1132.0C618.0,1140.1 617.7,1150.4 618.0,1160.0C618.3,1169.6 618.0,1182.4 619.9,1189.8C621.7,1197.3 624.5,1201.3 629.2,1204.7C633.8,1208.1 641.0,1209.6 647.8,1210.3C654.6,1211.1 663.3,1208.9 670.2,1209.2C677.0,1209.5 682.0,1211.1 688.8,1212.2C695.6,1213.3 703.1,1215.5 711.2,1215.9C719.2,1216.3 729.2,1214.8 737.3,1214.8C745.3,1214.8 752.8,1214.3 759.6,1215.9C766.5,1217.5 773.3,1223.7 778.3,1224.5C783.2,1225.2 785.1,1222.7 789.4,1220.4C793.8,1218.0 798.8,1212.4 804.4,1210.3C809.9,1208.2 816.8,1208.3 823.0,1207.7C829.2,1207.1 835.4,1207.4 841.6,1206.6C847.8,1205.8 854.7,1203.5 860.3,1202.9C865.9,1202.2 871.8,1200.7 875.2,1202.9C878.6,1205.0 879.4,1211.9 880.8,1215.9C882.1,1219.9 883.7,1223.4 883.4,1227.1C883.1,1230.8 880.9,1234.5 878.9,1238.3C876.9,1242.0 875.2,1247.6 871.4,1249.4C867.7,1251.3 860.9,1248.5 856.5,1249.4C852.2,1250.4 848.8,1252.2 845.4,1255.0C841.9,1257.8 840.4,1263.5 836.0,1266.2C831.7,1268.9 825.2,1269.9 819.3,1271.1C813.4,1272.2 806.8,1271.2 800.6,1272.9C794.4,1274.6 785.1,1279.8 782.0,1281.1" fill="none" stroke="#a2a8b3" stroke-width="1.5"/><path d="M364.5,818.2C365.8,818.3 368.3,817.9 372.0,819.0C375.7,820.0 378.8,824.9 386.9,824.5C395.0,824.2 408.0,818.6 420.5,817.1C432.9,815.5 450.9,818.0 461.5,815.2C472.0,812.4 478.2,802.6 483.8,800.3C489.4,798.0 488.2,800.0 495.0,801.4C501.8,802.9 511.8,808.8 524.8,808.9C537.9,809.0 558.4,801.3 573.3,802.2C588.2,803.1 601.8,812.6 614.3,814.1C626.7,815.7 637.9,812.9 647.8,811.5C657.7,810.1 667.1,811.2 673.9,805.9C680.7,800.6 685.6,786.0 688.8,779.8C692.0,773.6 692.7,773.6 693.3,768.6C693.9,763.7 692.2,757.6 692.5,750.0C692.9,742.4 696.1,731.6 695.5,723.0C694.9,714.5 691.2,705.6 688.8,698.8C686.4,692.0 684.5,687.9 681.4,682.0C678.2,676.1 673.3,669.6 670.2,663.4C667.1,657.2 664.1,650.0 662.7,644.8C661.4,639.5 660.7,635.8 662.0,631.7C663.2,627.7 665.7,624.3 670.2,620.5C674.6,616.8 682.3,612.3 688.8,609.4C695.3,606.4 703.7,603.3 709.3,602.6C714.9,602.0 716.5,602.8 722.4,605.6C728.3,608.5 738.5,616.5 744.7,619.8C750.9,623.1 755.5,624.3 759.6,625.4C763.8,626.4 768.0,626.0 769.7,626.1" fill="none" stroke="#9c9c9c" stroke-width="1.5"/><path d="M769.7,626.1C770.8,621.5 774.3,604.8 776.4,598.2C778.4,591.5 778.6,588.4 782.0,586.2C785.4,584.1 788.2,585.1 796.9,585.1C805.6,585.1 826.4,586.9 834.2,586.2C841.9,585.6 840.4,584.4 843.5,581.4C846.6,578.4 850.8,572.4 852.8,568.4C854.8,564.3 855.4,562.8 855.4,557.2C855.4,551.6 850.8,540.5 852.8,534.8C854.9,529.1 863.1,526.3 867.7,522.9C872.4,519.5 876.4,514.7 880.8,514.3C885.1,513.9 889.1,518.7 893.8,520.6C898.5,522.6 904.4,525.7 908.7,525.9C913.1,526.1 915.9,523.7 919.9,521.8C923.9,519.8 928.9,514.5 932.9,514.3C937.0,514.1 941.0,519.2 944.1,520.6C947.2,522.1 948.2,524.1 951.6,522.9C955.0,521.7 960.6,514.7 964.6,513.6C968.7,512.4 971.8,516.1 975.8,516.2C979.8,516.3 985.7,515.9 988.8,514.3C992.0,512.8 992.3,510.6 994.4,506.9C996.6,503.1 998.8,495.6 1001.9,491.9C1005.0,488.3 1009.7,488.0 1013.1,485.2C1016.5,482.4 1017.7,478.0 1022.4,475.2C1027.1,472.4 1036.4,468.2 1041.0,468.5C1045.7,468.8 1047.1,473.9 1050.3,477.0C1053.6,480.2 1055.8,486.4 1060.8,487.5C1065.8,488.5 1076.0,486.0 1080.2,483.4C1084.3,480.7 1083.3,474.7 1085.8,471.4C1088.2,468.2 1090.4,463.7 1095.1,464.0C1099.7,464.3 1107.5,469.6 1113.7,473.3C1119.9,477.0 1127.7,481.4 1132.3,486.4C1137.0,491.3 1138.2,496.0 1141.7,503.1C1145.1,510.3 1148.8,522.4 1152.8,529.2C1156.9,536.1 1160.3,539.2 1165.9,544.1C1171.5,549.1 1181.7,554.9 1186.4,559.0C1191.0,563.2 1190.4,566.8 1193.8,569.1C1197.3,571.4 1202.2,573.6 1206.9,572.8C1211.5,572.1 1215.6,568.0 1221.8,564.6C1228.0,561.2 1236.7,555.1 1244.2,552.3C1251.6,549.5 1260.9,546.7 1266.5,547.9C1272.1,549.0 1274.0,556.1 1277.7,559.0C1281.4,562.0 1285.9,565.4 1288.9,565.7C1291.9,566.1 1293.9,564.8 1295.6,560.9C1297.3,557.0 1298.0,545.8 1299.3,542.3C1300.7,538.7 1300.3,538.6 1303.8,539.7C1307.3,540.7 1314.3,546.4 1320.6,548.6C1326.9,550.8 1334.7,552.2 1341.6,552.9C1348.6,553.6 1358.7,552.9 1362.1,552.9" fill="none" stroke="#9c9c9c" stroke-width="1.5"/><path d="M769.7,626.1C770.2,627.7 770.6,632.3 772.7,635.4C774.7,638.6 777.3,641.2 782.0,644.8C786.6,648.4 794.4,652.1 800.6,657.1C806.8,662.0 813.7,669.5 819.3,674.6C824.9,679.7 829.5,684.2 834.2,687.6C838.8,691.0 843.8,693.1 847.2,695.1C850.6,697.1 853.3,696.4 854.7,699.6C856.0,702.7 855.9,706.4 855.4,713.7C854.9,721.0 851.7,732.4 851.7,743.5C851.7,754.7 854.6,773.5 855.4,780.8C856.2,788.1 855.8,783.1 856.5,787.3C857.2,791.5 860.1,799.4 859.5,805.9C858.9,812.4 855.5,819.7 852.8,826.4C850.1,833.1 849.1,844.7 843.5,846.2C837.9,847.6 825.8,834.9 819.3,835.0C812.7,835.1 810.6,841.5 804.4,846.9C798.1,852.3 788.2,862.7 782.0,867.4C775.8,872.1 773.3,872.4 767.1,874.9C760.9,877.3 749.4,878.3 744.7,882.3C740.1,886.4 740.4,893.2 739.1,899.1C737.9,905.0 737.9,907.8 737.3,917.7C736.6,927.7 734.8,948.8 735.4,958.7C736.0,968.7 739.1,971.1 741.0,977.4C742.9,983.6 746.3,990.7 746.6,996.0C746.9,1001.3 744.4,1005.3 742.9,1009.0C741.3,1012.8 737.9,1015.6 737.3,1018.4C736.6,1021.2 740.4,1023.3 739.1,1025.8C737.9,1028.3 732.9,1030.5 729.8,1033.3C726.7,1036.1 723.0,1039.5 720.5,1042.6C718.0,1045.7 719.6,1049.1 714.9,1051.9C710.2,1054.7 697.8,1053.8 692.5,1059.4C687.3,1064.9 688.2,1078.6 683.2,1085.4C678.2,1092.3 667.7,1095.4 662.7,1100.4C657.7,1105.3 656.2,1110.6 653.4,1115.3C650.6,1119.9 649.4,1125.5 645.9,1128.3C642.5,1131.1 637.6,1131.4 632.9,1132.0C628.2,1132.7 620.5,1132.0 618.0,1132.0" fill="none" stroke="#9c9c9c" stroke-width="1.5"/><rect x="1093.2" y="636.8" width="959.6" height="534.2" fill="none" stroke="#c8a227" stroke-width="2"/><g transform="translate(1216.0,776.8)"><path d="M12.42,34.95 A10.93,10.93 0 1 1 11.10,13.08 A9.94,9.94 0 1 1 30.48,13.08 A10.60,10.60 0 1 1 28.57,34.78" fill="none" stroke="#ecec1c" stroke-width="2.4" stroke-linecap="round"/><path d="M-6.6,-6.6 L20.7,15.3" stroke="#fff" stroke-width="2.4" stroke-linecap="round"/><path d="M40.8,35.3 H53 L70.6,56.5" fill="none" stroke="#9d9d9d" stroke-width="2"/></g><g transform="translate(1401.3,914.0)"><path d="M12.42,34.95 A10.93,10.93 0 1 1 11.10,13.08 A9.94,9.94 0 1 1 30.48,13.08 A10.60,10.60 0 1 1 28.57,34.78" fill="none" stroke="#ecec1c" stroke-width="2.4" stroke-linecap="round"/><path d="M-6.6,-6.6 L20.7,15.3" stroke="#fff" stroke-width="2.4" stroke-linecap="round"/><path d="M40.8,35.3 H53 L70.6,56.5" fill="none" stroke="#9d9d9d" stroke-width="2"/></g><g transform="translate(1236.5,946.4)"><path d="M12.42,34.95 A10.93,10.93 0 1 1 11.10,13.08 A9.94,9.94 0 1 1 30.48,13.08 A10.60,10.60 0 1 1 28.57,34.78" fill="none" stroke="#ecec1c" stroke-width="2.4" stroke-linecap="round"/><path d="M-6.6,-6.6 L20.7,15.3" stroke="#fff" stroke-width="2.4" stroke-linecap="round"/><path d="M40.8,35.3 H53 L70.6,56.5" fill="none" stroke="#9d9d9d" stroke-width="2"/></g><g transform="translate(1740.4,1107.8)"><path d="M12.42,34.95 A10.93,10.93 0 1 1 11.10,13.08 A9.94,9.94 0 1 1 30.48,13.08 A10.60,10.60 0 1 1 28.57,34.78" fill="none" stroke="#ecec1c" stroke-width="2.4" stroke-linecap="round"/><path d="M-6.6,-6.6 L20.7,15.3" stroke="#fff" stroke-width="2.4" stroke-linecap="round"/><path d="M40.8,35.3 H53 L70.6,56.5" fill="none" stroke="#9d9d9d" stroke-width="2"/></g><g transform="translate(1836.6,1167.4)"><path d="M12.42,34.95 A10.93,10.93 0 1 1 11.10,13.08 A9.94,9.94 0 1 1 30.48,13.08 A10.60,10.60 0 1 1 28.57,34.78" fill="none" stroke="#ecec1c" stroke-width="2.4" stroke-linecap="round"/><path d="M-6.6,-6.6 L20.7,15.3" stroke="#fff" stroke-width="2.4" stroke-linecap="round"/><path d="M40.8,35.3 H53 L70.6,56.5" fill="none" stroke="#9d9d9d" stroke-width="2"/></g><g transform="translate(2503.6,731.5)"><path d="M12.42,34.95 A10.93,10.93 0 1 1 11.10,13.08 A9.94,9.94 0 1 1 30.48,13.08 A10.60,10.60 0 1 1 28.57,34.78" fill="none" stroke="#ecec1c" stroke-width="2.4" stroke-linecap="round"/><path d="M-6.6,-6.6 L20.7,15.3" stroke="#fff" stroke-width="2.4" stroke-linecap="round"/><path d="M40.8,35.3 H53 L70.6,56.5" fill="none" stroke="#9d9d9d" stroke-width="2"/></g><g transform="translate(1636.1,935.2)"><path d="M0.8,31 C2.5,10 8,1.2 13.6,1.2 C19.2,1.2 24.7,10 26.4,31" fill="none" stroke="#1fd5d9" stroke-width="2.5" stroke-linecap="round"/><path d="M-12.3,15.3 H13.8" stroke="#f2f2f2" stroke-width="2.5"/></g><path d="M1618.2,876.7 V951.3 L1630.5,966.2" fill="none" stroke="#9d9d9d" stroke-width="1.8"/><g transform="translate(1742.3,946.4)"><path d="M0.8,31 C2.5,10 8,1.2 13.6,1.2 C19.2,1.2 24.7,10 26.4,31" fill="none" stroke="#1fd5d9" stroke-width="2.5" stroke-linecap="round"/><path d="M-12.3,15.3 H13.8" stroke="#f2f2f2" stroke-width="2.5"/><path d="M32.8,31 H48.2 L134,74" fill="none" stroke="#9d9d9d" stroke-width="1.8"/></g><g transform="translate(1686.4,995.2)"><path d="M0.8,31 C2.5,10 8,1.2 13.6,1.2 C19.2,1.2 24.7,10 26.4,31" fill="none" stroke="#1fd5d9" stroke-width="2.5" stroke-linecap="round"/><path d="M-12.3,15.3 H13.8" stroke="#f2f2f2" stroke-width="2.5"/><path d="M32.8,31 H48.2 L134,74" fill="none" stroke="#9d9d9d" stroke-width="1.8"/></g><g transform="translate(1826.2,1009.8)"><path d="M0.8,31 C2.5,10 8,1.2 13.6,1.2 C19.2,1.2 24.7,10 26.4,31" fill="none" stroke="#1fd5d9" stroke-width="2.5" stroke-linecap="round"/><path d="M-12.3,15.3 H13.8" stroke="#f2f2f2" stroke-width="2.5"/><path d="M32.8,31 H48.2 L134,74" fill="none" stroke="#9d9d9d" stroke-width="1.8"/></g><g transform="translate(1733.0,1047.0)"><path d="M0.8,31 C2.5,10 8,1.2 13.6,1.2 C19.2,1.2 24.7,10 26.4,31" fill="none" stroke="#1fd5d9" stroke-width="2.5" stroke-linecap="round"/><path d="M-12.3,15.3 H13.8" stroke="#f2f2f2" stroke-width="2.5"/><path d="M32.8,31 H48.2 L134,74" fill="none" stroke="#9d9d9d" stroke-width="1.8"/></g><g transform="translate(1926.8,933.7)"><path d="M0.8,31 C2.5,10 8,1.2 13.6,1.2 C19.2,1.2 24.7,10 26.4,31" fill="none" stroke="#1fd5d9" stroke-width="2.5" stroke-linecap="round"/><path d="M-12.3,15.3 H13.8" stroke="#f2f2f2" stroke-width="2.5"/><path d="M32.8,31 H48.2 L134,74" fill="none" stroke="#9d9d9d" stroke-width="1.8"/></g><g transform="translate(2292.3,830.2)"><path d="M0.8,31 C2.5,10 8,1.2 13.6,1.2 C19.2,1.2 24.7,10 26.4,31" fill="none" stroke="#1fd5d9" stroke-width="2.5" stroke-linecap="round"/><path d="M-12.3,15.3 H13.8" stroke="#f2f2f2" stroke-width="2.5"/><path d="M32.8,31 H48.2 L134,74" fill="none" stroke="#9d9d9d" stroke-width="1.8"/></g><g transform="translate(2759.0,909.6)"><path d="M0.8,31 C2.5,10 8,1.2 13.6,1.2 C19.2,1.2 24.7,10 26.4,31" fill="none" stroke="#1fd5d9" stroke-width="2.5" stroke-linecap="round"/><path d="M-12.3,15.3 H13.8" stroke="#f2f2f2" stroke-width="2.5"/><path d="M32.8,31 H48.2 L134,74" fill="none" stroke="#9d9d9d" stroke-width="1.8"/></g><g transform="translate(3263.9,1078.8)"><path d="M0.8,31 C2.5,10 8,1.2 13.6,1.2 C19.2,1.2 24.7,10 26.4,31" fill="none" stroke="#1fd5d9" stroke-width="2.5" stroke-linecap="round"/><path d="M-12.3,15.3 H13.8" stroke="#f2f2f2" stroke-width="2.5"/><path d="M32.8,31 H48.2 L134,74" fill="none" stroke="#9d9d9d" stroke-width="1.8"/></g></svg>
<span class="t" style="left:1287.0px;top:837px;font-size:15.90px;line-height:17px;color:#f0f0f0;transform:scaleX(0.8590);-webkit-text-stroke:0.25px #f0f0f0;letter-spacing:0.3px;">AA6704</span>
<span class="t" style="left:1472.3px;top:974px;font-size:15.90px;line-height:17px;color:#f0f0f0;transform:scaleX(0.8590);-webkit-text-stroke:0.25px #f0f0f0;letter-spacing:0.3px;">AA6704</span>
<span class="t" style="left:1307.5px;top:1006px;font-size:15.90px;line-height:17px;color:#f0f0f0;transform:scaleX(0.8590);-webkit-text-stroke:0.25px #f0f0f0;letter-spacing:0.3px;">AA6704</span>
<span class="t" style="left:1811.4px;top:1168px;font-size:15.90px;line-height:17px;color:#f0f0f0;transform:scaleX(0.8590);-webkit-text-stroke:0.25px #f0f0f0;letter-spacing:0.3px;">AA6704</span>
<span class="t" style="left:1907.6px;top:1227px;font-size:15.90px;line-height:17px;color:#f0f0f0;transform:scaleX(0.8590);-webkit-text-stroke:0.25px #f0f0f0;letter-spacing:0.3px;">AA6704</span>
<span class="t" style="left:2574.6px;top:791px;font-size:15.90px;line-height:17px;color:#f0f0f0;transform:scaleX(0.8590);-webkit-text-stroke:0.25px #f0f0f0;letter-spacing:0.3px;">AA6704</span>
<span class="t" style="left:1877.5px;top:1019px;font-size:15.90px;line-height:17px;color:#f0f0f0;transform:scaleX(0.8625);-webkit-text-stroke:0.25px #f0f0f0;letter-spacing:0.3px;">AA6545</span>
<span class="t" style="left:1821.6px;top:1067px;font-size:15.90px;line-height:17px;color:#f0f0f0;transform:scaleX(0.8625);-webkit-text-stroke:0.25px #f0f0f0;letter-spacing:0.3px;">AA6545</span>
<span class="t" style="left:1961.4px;top:1082px;font-size:15.90px;line-height:17px;color:#f0f0f0;transform:scaleX(0.8625);-webkit-text-stroke:0.25px #f0f0f0;letter-spacing:0.3px;">AA6545</span>
<span class="t" style="left:1868.2px;top:1119px;font-size:15.90px;line-height:17px;color:#f0f0f0;transform:scaleX(0.8625);-webkit-text-stroke:0.25px #f0f0f0;letter-spacing:0.3px;">AA6545</span>
<span class="t" style="left:2062.0px;top:1006px;font-size:15.90px;line-height:17px;color:#f0f0f0;transform:scaleX(0.8625);-webkit-text-stroke:0.25px #f0f0f0;letter-spacing:0.3px;">AA6545</span>
<span class="t" style="left:2427.5px;top:902px;font-size:15.90px;line-height:17px;color:#f0f0f0;transform:scaleX(0.8625);-webkit-text-stroke:0.25px #f0f0f0;letter-spacing:0.3px;">AA6545</span>
<span class="t" style="left:2894.2px;top:982px;font-size:15.90px;line-height:17px;color:#f0f0f0;transform:scaleX(0.8625);-webkit-text-stroke:0.25px #f0f0f0;letter-spacing:0.3px;">AA6545</span>
<span class="t" style="left:3399.1px;top:1151px;font-size:15.90px;line-height:17px;color:#f0f0f0;transform:scaleX(0.8625);-webkit-text-stroke:0.25px #f0f0f0;letter-spacing:0.3px;">AA6545</span>
<span class="t" style="left:1563.4px;top:857px;font-size:15.90px;line-height:17px;color:#f0f0f0;transform:scaleX(0.8625);-webkit-text-stroke:0.25px #f0f0f0;letter-spacing:0.3px;">AA6545</span>
<div class="b" style="left:391.3px;top:229.8px;width:1361.6px;height:64.0px;background:#0a0c0d;border-radius:11.0px;"></div>
<div class="b" style="left:507.8px;top:233.0px;width:2.6px;height:57.5px;background:#1b1e20;"></div>
<div class="b" style="left:626.8px;top:233.0px;width:2.6px;height:57.5px;background:#1b1e20;"></div>
<div class="b" style="left:746.0px;top:233.0px;width:2.6px;height:57.5px;background:#1b1e20;"></div>
<div class="b" style="left:866.2px;top:233.0px;width:2.6px;height:57.5px;background:#1b1e20;"></div>
<div class="b" style="left:985.4px;top:233.0px;width:2.6px;height:57.5px;background:#1b1e20;"></div>
<div class="b" style="left:1104.3px;top:233.0px;width:2.6px;height:57.5px;background:#1b1e20;"></div>
<div class="b" style="left:1223.5px;top:233.0px;width:2.6px;height:57.5px;background:#1b1e20;"></div>
<div class="b" style="left:1356.2px;top:233.0px;width:2.6px;height:57.5px;background:#1b1e20;"></div>
<div class="b" style="left:1488.1px;top:233.0px;width:2.6px;height:57.5px;background:#1b1e20;"></div>
<div class="b" style="left:1620.9px;top:233.0px;width:2.6px;height:57.5px;background:#1b1e20;"></div>
<svg class="b" style="left:391.0px;top:229.0px;" width="1362.0" height="65.0" viewBox="391 229 1362 65"><circle cx="449.6" cy="253.9" r="7.4" fill="#dcdcdc"/><path d="M434.8,272.5 V272.5 C434.8,266.5 444.5,263.3 449.5,263.3 C454.5,263.3 464.2,266.5 464.2,272.5 C464.2,274.5 463.4,275.4 461.4,275.4 H437.6 C435.6,275.4 434.8,274.5 434.8,272.5 Z" fill="#dcdcdc"/><rect x="554.2" y="252.2" width="29.4" height="2.5" fill="#dcdcdc"/><rect x="554.2" y="260.6" width="29.4" height="2.5" fill="#dcdcdc"/><rect x="554.2" y="268.9" width="29.4" height="2.5" fill="#dcdcdc"/><path d="M688,246.6 L703,258.4 L688,270.3 L673.2,258.4 Z" fill="#dcdcdc" stroke="#dcdcdc" stroke-width="1" stroke-linejoin="round"/><path d="M674.8,265 L688,275.3 L701.3,265" fill="none" stroke="#dcdcdc" stroke-width="3" stroke-linecap="round" stroke-linejoin="round"/><rect x="793" y="253.8" width="29" height="15.8" rx="2.5" fill="none" stroke="#dcdcdc" stroke-width="3.2"/><rect x="799.3" y="254" width="2.9" height="7.6" fill="#dcdcdc"/><rect x="805.8" y="254" width="2.9" height="7.6" fill="#dcdcdc"/><rect x="812.5" y="254" width="2.9" height="7.6" fill="#dcdcdc"/><path d="M917.32,272.82 A14.60,14.60 0 1 1 928.68,276.29" fill="none" stroke="#dcdcdc" stroke-width="3" stroke-linecap="round"/><path d="M923.81,252.29 A10.00,10.00 0 1 1 917.44,258.54" fill="none" stroke="#dcdcdc" stroke-width="2.7" stroke-linecap="round"/><circle cx="926.9" cy="261.8" r="4.8" fill="none" stroke="#dcdcdc" stroke-width="3.5"/><path d="M1041.3,251.5 C1037,253 1035.3,256 1035.2,259 C1031,260.5 1029.2,264 1029.8,267.5 C1030.5,271 1033,273.2 1037.2,273.4" fill="none" stroke="#dcdcdc" stroke-width="2.8" stroke-linecap="round"/><path d="M1047.5,273.3 C1051.5,273 1054,271 1055,268" fill="none" stroke="#dcdcdc" stroke-width="2.8" stroke-linecap="round"/><path d="M1158.5,253.7 H1152.2 V273.4 L1160,269.7 L1167.9,273.4 V267.5" fill="none" stroke="#dcdcdc" stroke-width="3" stroke-linejoin="miter"/><path d="M1284.5,254.4 H1278 V274 L1285.8,270.3 L1293.6,274 V268" fill="none" stroke="#dcdcdc" stroke-width="3"/><path d="M1304.53,260.32 A7.80,7.80 0 1 1 1301.20,250.65" fill="none" stroke="#dcdcdc" stroke-width="2.7" stroke-linecap="round"/><path d="M1307.2,247 V256 H1298.6 Z" fill="#dcdcdc"/><path d="M1417.5,250 L1413.5,249.3 L1406.8,252 V274.5 L1413.5,271.8 L1421.5,274.6 L1427.2,272.6 V268.5" fill="none" stroke="#dcdcdc" stroke-width="2.8" stroke-linejoin="round"/><path d="M1413.5,249.5 V271.5 M1421.5,268.5 V274" fill="none" stroke="#dcdcdc" stroke-width="2.6"/><path d="M1445.2,276.2 V283.2 H1437.6 Z" fill="#dcdcdc"/><path d="M1540.76,255.73 A13.40,13.40 0 1 1 1566.29,263.78" fill="none" stroke="#dcdcdc" stroke-width="2.8" stroke-linecap="round"/><path d="M1550.23,272.14 A13.40,13.40 0 0 1 1540.76,262.67" fill="none" stroke="#dcdcdc" stroke-width="2.8" stroke-linecap="round"/><path d="M1540.2,248.6 V256 H1547.6" fill="none" stroke="#dcdcdc" stroke-width="2.8" stroke-linecap="round" stroke-linejoin="round"/><path d="M1554.3,252.2 V259.4 L1557.2,262.3" fill="none" stroke="#dcdcdc" stroke-width="2.8" stroke-linecap="round" stroke-linejoin="round"/><line x1="1569.24" y1="273.30" x2="1572.01" y2="274.90" stroke="#dcdcdc" stroke-width="3.6"/><line x1="1565.60" y1="275.40" x2="1565.60" y2="278.60" stroke="#dcdcdc" stroke-width="3.6"/><line x1="1561.96" y1="273.30" x2="1559.19" y2="274.90" stroke="#dcdcdc" stroke-width="3.6"/><line x1="1561.96" y1="269.10" x2="1559.19" y2="267.50" stroke="#dcdcdc" stroke-width="3.6"/><line x1="1565.60" y1="267.00" x2="1565.60" y2="263.80" stroke="#dcdcdc" stroke-width="3.6"/><line x1="1569.24" y1="269.10" x2="1572.01" y2="267.50" stroke="#dcdcdc" stroke-width="3.6"/><circle cx="1565.6" cy="271.2" r="4.3" fill="none" stroke="#dcdcdc" stroke-width="3.3"/><path d="M1577.6,276.2 V283.2 H1570 Z" fill="#dcdcdc"/><path d="M1674,247.4 V274.6 H1700.4" fill="none" stroke="#dcdcdc" stroke-width="3" stroke-linecap="round" stroke-linejoin="round"/><path d="M1678.8,266.9 L1687.9,257.8 L1693.5,262 L1703.2,253.6" fill="none" stroke="#dcdcdc" stroke-width="2.8" stroke-linecap="round" stroke-linejoin="round"/></svg>
<span class="t" style="left:1046.2px;top:244px;font-size:21.50px;line-height:24px;color:#3d94e8;font-weight:700;transform:scaleX(0.7611);-webkit-text-stroke:0.73px #3d94e8;">12</span>
<span class="t" style="left:1163.8px;top:244px;font-size:21.50px;line-height:24px;color:#3d94e8;font-weight:700;transform:scaleX(0.8197);-webkit-text-stroke:0.73px #3d94e8;">12</span>
<span class="t" style="left:1420.2px;top:247px;font-size:17.60px;line-height:20px;color:#3d94e8;font-weight:700;transform:scaleX(0.9868);-webkit-text-stroke:0.60px #3d94e8;">2D</span>
<div class="b" style="left:372.0px;top:1273.0px;width:3110.0px;height:700.0px;background:#0a0c0d;border-radius:12px 0 0 0;border:3.2px solid #3a3c3d;"></div>
<div class="b" style="left:375.2px;top:1276.2px;width:3110.0px;height:64.3px;background:#1a1a1a;border-radius:9px 0 0 0;"></div>
<span class="t" style="left:401.4px;top:1294px;font-size:26.90px;line-height:30px;color:#f2f2f2;font-weight:700;transform:scaleX(0.8024);-webkit-text-stroke:0.91px #f2f2f2;">SELECT AREA</span>
<div class="b" style="left:401.0px;top:1366.2px;width:3036.6px;height:64.4px;background:#0a0c0d;border-radius:8.0px;border:3px solid #3b4145;"></div>
<div class="b" style="left:737.4px;top:1367.0px;width:3.0px;height:62.8px;background:#3b4145;"></div>
<div class="b" style="left:1074.8px;top:1367.0px;width:3.0px;height:62.8px;background:#3b4145;"></div>
<div class="b" style="left:1412.2px;top:1367.0px;width:3.0px;height:62.8px;background:#3b4145;"></div>
<div class="b" style="left:1749.6px;top:1367.0px;width:3.0px;height:62.8px;background:#3b4145;"></div>
<div class="b" style="left:2087.0px;top:1367.0px;width:3.0px;height:62.8px;background:#3b4145;"></div>
<div class="b" style="left:2424.4px;top:1367.0px;width:3.0px;height:62.8px;background:#3b4145;"></div>
<div class="b" style="left:2761.8px;top:1367.0px;width:3.0px;height:62.8px;background:#3b4145;"></div>
<div class="b" style="left:2090.1px;top:1369.2px;width:334.2px;height:58.4px;background:#3d94e8;"></div>
<span class="t" style="left:534.5px;top:1376px;font-size:22.75px;line-height:26px;color:#dedede;transform:scaleX(0.7699);-webkit-text-stroke:0.36px #dedede;">HEADER</span>
<span class="t" style="left:555.5px;top:1406px;font-size:15.90px;line-height:17px;color:#c4c4c4;transform:scaleX(0.8765);-webkit-text-stroke:0.25px #c4c4c4;">3849</span>
<span class="t" style="left:871.9px;top:1376px;font-size:22.75px;line-height:26px;color:#dedede;transform:scaleX(0.7699);-webkit-text-stroke:0.36px #dedede;">HEADER</span>
<span class="t" style="left:892.9px;top:1406px;font-size:15.90px;line-height:17px;color:#c4c4c4;transform:scaleX(0.8765);-webkit-text-stroke:0.25px #c4c4c4;">1234</span>
<span class="t" style="left:1209.3px;top:1376px;font-size:22.75px;line-height:26px;color:#dedede;transform:scaleX(0.7699);-webkit-text-stroke:0.36px #dedede;">HEADER</span>
<span class="t" style="left:1230.3px;top:1406px;font-size:15.90px;line-height:17px;color:#c4c4c4;transform:scaleX(0.8765);-webkit-text-stroke:0.25px #c4c4c4;">1234</span>
<span class="t" style="left:1546.7px;top:1376px;font-size:22.75px;line-height:26px;color:#dedede;transform:scaleX(0.7699);-webkit-text-stroke:0.36px #dedede;">HEADER</span>
<span class="t" style="left:1567.7px;top:1406px;font-size:15.90px;line-height:17px;color:#c4c4c4;transform:scaleX(0.8765);-webkit-text-stroke:0.25px #c4c4c4;">1234</span>
<span class="t" style="left:1884.1px;top:1376px;font-size:22.75px;line-height:26px;color:#dedede;transform:scaleX(0.7699);-webkit-text-stroke:0.36px #dedede;">HEADER</span>
<span class="t" style="left:1905.1px;top:1406px;font-size:15.90px;line-height:17px;color:#c4c4c4;transform:scaleX(0.8765);-webkit-text-stroke:0.25px #c4c4c4;">1234</span>
<span class="t" style="left:2220.8px;top:1376px;font-size:22.75px;line-height:26px;color:#0b2543;font-weight:700;transform:scaleX(0.7755);-webkit-text-stroke:0.77px #0b2543;">HEADER</span>
<span class="t" style="left:2242.0px;top:1406px;font-size:15.90px;line-height:17px;color:#0b2543;font-weight:700;transform:scaleX(0.9048);-webkit-text-stroke:0.54px #0b2543;">1234</span>
<span class="t" style="left:2558.9px;top:1376px;font-size:22.75px;line-height:26px;color:#dedede;transform:scaleX(0.7699);-webkit-text-stroke:0.36px #dedede;">HEADER</span>
<span class="t" style="left:2579.9px;top:1406px;font-size:15.90px;line-height:17px;color:#c4c4c4;transform:scaleX(0.8765);-webkit-text-stroke:0.25px #c4c4c4;">1234</span>
<div class="b" style="left:401.0px;top:1470.0px;width:51.6px;height:51.2px;background:#1b1c1d;border-radius:8.0px;"></div>
<div class="b" style="left:465.5px;top:1470.0px;width:51.6px;height:51.2px;background:#1b1c1d;border-radius:8.0px;"></div>
<div class="b" style="left:530.0px;top:1470.0px;width:51.6px;height:51.2px;background:#1b1c1d;border-radius:8.0px;"></div>
<div class="b" style="left:594.5px;top:1470.0px;width:51.6px;height:51.2px;background:#1b1c1d;border-radius:8.0px;"></div>
<div class="b" style="left:659.0px;top:1470.0px;width:51.6px;height:51.2px;background:#1b1c1d;border-radius:8.0px;"></div>
<div class="b" style="left:723.5px;top:1470.0px;width:51.6px;height:51.2px;background:#1b1c1d;border-radius:8.0px;"></div>
<div class="b" style="left:788.0px;top:1470.0px;width:51.6px;height:51.2px;background:#1b1c1d;border-radius:8.0px;"></div>
<svg class="b" style="left:395.0px;top:1465.0px;" width="440.0" height="62.0" viewBox="395 1465 440 62"><rect x="414.1" y="1482.7" width="25.9" height="25.8" rx="7.5" fill="#3d94e8"/><rect x="419.6" y="1493.8" width="15.4" height="2.9" fill="#0b2543"/><circle cx="491.4" cy="1495.6" r="12" fill="none" stroke="#e4e4e4" stroke-width="2.7" stroke-dasharray="6.6 2.83" stroke-dashoffset="3.3"/><circle cx="491.4" cy="1495.6" r="4.4" fill="#e4e4e4"/><path d="M545.2,1491.0 V1484.8 H551.4" fill="none" stroke="#e4e4e4" stroke-width="3" stroke-linejoin="round"/><path d="M566.8,1491.0 V1484.8 H560.6" fill="none" stroke="#e4e4e4" stroke-width="3" stroke-linejoin="round"/><path d="M566.8,1500.2 V1506.4 H560.6" fill="none" stroke="#e4e4e4" stroke-width="3" stroke-linejoin="round"/><path d="M545.2,1500.2 V1506.4 H551.4" fill="none" stroke="#e4e4e4" stroke-width="3" stroke-linejoin="round"/><circle cx="556.0" cy="1495.6" r="4.4" fill="#e4e4e4"/><path d="M616.0,1483.1 V1490.6 M624.6,1483.1 V1490.6" stroke="#56616b" stroke-width="2.8" fill="none"/><path d="M612.7,1490.6 H627.9 V1496.1 C627.9,1499.6 625.3,1502.1 623.3,1503.6 V1507.6 H617.3 V1503.6 C615.3,1502.1 612.7,1499.6 612.7,1496.1 Z" fill="none" stroke="#56616b" stroke-width="2.8" stroke-linejoin="round"/><path d="M681.0,1483.1 V1490.6 M689.6,1483.1 V1490.6" stroke="#56616b" stroke-width="2.8" fill="none"/><path d="M677.7,1490.6 H692.9 V1496.1 C692.9,1499.6 690.3,1502.1 688.3,1503.6 V1507.6 H682.3 V1503.6 C680.3,1502.1 677.7,1499.6 677.7,1496.1 Z" fill="none" stroke="#56616b" stroke-width="2.8" stroke-linejoin="round"/><path d="M673.3,1483 L697.5,1507.5" stroke="#1b1c1d" stroke-width="6"/><path d="M672.5,1484.5 L696.5,1508.5" stroke="#56616b" stroke-width="2.6" stroke-linecap="round"/><path d="M738.2,1503 L738.2,1507.2 L742.4,1507.2 L757.6,1492 L753.4,1487.8 Z M754.7,1486.5 L757,1484.2 C757.6,1483.6 758.4,1483.6 759,1484.2 L761.2,1486.4 C761.8,1487 761.8,1487.8 761.2,1488.4 L758.9,1490.7 Z" fill="#e4e4e4"/><path d="M805.8,1487.5 H822.4 V1505.6 C822.4,1506.9 821.4,1507.8 820.2,1507.8 H808 C806.8,1507.8 805.8,1506.9 805.8,1505.6 Z" fill="#f87171"/><path d="M804.6,1483.4 H810 L811,1482.3 H817.2 L818.2,1483.4 H823.6 V1485.9 H804.6 Z" fill="#f87171"/><rect x="810.2" y="1490" width="2.7" height="14.6" fill="#1b1c1d"/><rect x="815.5" y="1490" width="2.7" height="14.6" fill="#1b1c1d"/></svg>
<span class="t" style="left:459.4px;top:1578px;font-size:21.50px;line-height:24px;color:#ececec;font-weight:700;transform:scaleX(0.8807);-webkit-text-stroke:0.73px #ececec;">Header</span>
<span class="t" style="left:644.8px;top:1578px;font-size:21.50px;line-height:24px;color:#ececec;font-weight:700;transform:scaleX(0.8807);-webkit-text-stroke:0.73px #ececec;">Header</span>
<span class="t" style="left:852.8px;top:1578px;font-size:21.50px;line-height:24px;color:#ececec;font-weight:700;transform:scaleX(0.8807);-webkit-text-stroke:0.73px #ececec;">Header</span>
<span class="t" style="left:1040.3px;top:1578px;font-size:21.50px;line-height:24px;color:#ececec;font-weight:700;transform:scaleX(0.8807);-webkit-text-stroke:0.73px #ececec;">Header</span>
<span class="t" style="left:1248.6px;top:1578px;font-size:21.50px;line-height:24px;color:#ececec;font-weight:700;transform:scaleX(0.8807);-webkit-text-stroke:0.73px #ececec;">Header</span>
<span class="t" style="left:1509.2px;top:1578px;font-size:21.50px;line-height:24px;color:#ececec;font-weight:700;transform:scaleX(0.8807);-webkit-text-stroke:0.73px #ececec;">Header</span>
<span class="t" style="left:1750.0px;top:1578px;font-size:21.50px;line-height:24px;color:#ececec;font-weight:700;transform:scaleX(0.8807);-webkit-text-stroke:0.73px #ececec;">Header</span>
<span class="t" style="left:1958.2px;top:1578px;font-size:21.50px;line-height:24px;color:#ececec;font-weight:700;transform:scaleX(0.8807);-webkit-text-stroke:0.73px #ececec;">Header</span>
<span class="t" style="left:2166.2px;top:1578px;font-size:21.50px;line-height:24px;color:#ececec;font-weight:700;transform:scaleX(0.8807);-webkit-text-stroke:0.73px #ececec;">Header</span>
<svg class="b" style="left:372.0px;top:1570.0px;" width="2000.0" height="40.0" viewBox="372 1570 2000 40"><path d="M536.3,1580.6 V1596.8 M532.2,1592.2 L536.3,1597 L540.4,1592.2" fill="none" stroke="#dcdcdc" stroke-width="1.7"/><path d="M547.2,1597.6 V1580.6 M543.1,1585.4 L547.2,1580.4 L551.3,1585.4" fill="none" stroke="#dcdcdc" stroke-width="1.7"/><path d="M724.5,1580.6 V1596.8 M720.4,1592.2 L724.5,1597 L728.6,1592.2" fill="none" stroke="#dcdcdc" stroke-width="1.7"/><path d="M735.4,1597.6 V1580.6 M731.3,1585.4 L735.4,1580.4 L739.5,1585.4" fill="none" stroke="#dcdcdc" stroke-width="1.7"/><path d="M932.5,1580.6 V1596.8 M928.4,1592.2 L932.5,1597 L936.6,1592.2" fill="none" stroke="#dcdcdc" stroke-width="1.7"/><path d="M943.4,1597.6 V1580.6 M939.3,1585.4 L943.4,1580.4 L947.5,1585.4" fill="none" stroke="#dcdcdc" stroke-width="1.7"/><path d="M1120.0,1580.6 V1596.8 M1115.9,1592.2 L1120.0,1597 L1124.1,1592.2" fill="none" stroke="#dcdcdc" stroke-width="1.7"/><path d="M1130.9,1597.6 V1580.6 M1126.8,1585.4 L1130.9,1580.4 L1135.0,1585.4" fill="none" stroke="#dcdcdc" stroke-width="1.7"/><path d="M1328.3,1580.6 V1596.8 M1324.2,1592.2 L1328.3,1597 L1332.4,1592.2" fill="none" stroke="#dcdcdc" stroke-width="1.7"/><path d="M1339.2,1597.6 V1580.6 M1335.1,1585.4 L1339.2,1580.4 L1343.3,1585.4" fill="none" stroke="#dcdcdc" stroke-width="1.7"/><path d="M1588.9,1580.6 V1596.8 M1584.8,1592.2 L1588.9,1597 L1593.0,1592.2" fill="none" stroke="#dcdcdc" stroke-width="1.7"/><path d="M1599.8,1597.6 V1580.6 M1595.7,1585.4 L1599.8,1580.4 L1603.9,1585.4" fill="none" stroke="#dcdcdc" stroke-width="1.7"/><path d="M1829.7,1580.6 V1596.8 M1825.6,1592.2 L1829.7,1597 L1833.8,1592.2" fill="none" stroke="#dcdcdc" stroke-width="1.7"/><path d="M1840.6,1597.6 V1580.6 M1836.5,1585.4 L1840.6,1580.4 L1844.7,1585.4" fill="none" stroke="#dcdcdc" stroke-width="1.7"/><path d="M2037.9,1580.6 V1596.8 M2033.8,1592.2 L2037.9,1597 L2042.0,1592.2" fill="none" stroke="#dcdcdc" stroke-width="1.7"/><path d="M2048.8,1597.6 V1580.6 M2044.7,1585.4 L2048.8,1580.4 L2052.9,1585.4" fill="none" stroke="#dcdcdc" stroke-width="1.7"/><path d="M2245.9,1580.6 V1596.8 M2241.8,1592.2 L2245.9,1597 L2250.0,1592.2" fill="none" stroke="#dcdcdc" stroke-width="1.7"/><path d="M2256.8,1597.6 V1580.6 M2252.7,1585.4 L2256.8,1580.4 L2260.9,1585.4" fill="none" stroke="#dcdcdc" stroke-width="1.7"/></svg>
<div class="b" style="left:401.0px;top:1718.2px;width:3100.0px;height:54.6px;background:#494949;"></div>
<div class="b" style="left:401.0px;top:1664.9px;width:3100.0px;height:1.6px;background:#3a3f43;"></div>
<div class="b" style="left:401.0px;top:1824.9px;width:3100.0px;height:1.6px;background:#3a3f43;"></div>
<div class="b" style="left:414.1px;top:1626.5px;width:25.6px;height:25.1px;border-radius:6.5px;border:2.6px solid #e8e8e8;"></div>
<div class="b" style="left:881.3px;top:1628.8px;width:19.8px;height:19.8px;background:#3dba7d;border-radius:10.0px;"></div>
<span class="t" style="left:459.7px;top:1625px;font-size:21.50px;line-height:24px;color:#ececec;transform:scaleX(0.8893);-webkit-text-stroke:0.34px #ececec;">Name</span>
<span class="t" style="left:644.9px;top:1628px;font-size:21.50px;line-height:24px;color:#ececec;transform:scaleX(0.9030);-webkit-text-stroke:0.34px #ececec;">Label</span>
<span class="t" style="left:1040.3px;top:1625px;font-size:21.50px;line-height:24px;color:#ececec;transform:scaleX(0.9030);-webkit-text-stroke:0.34px #ececec;">Label</span>
<span class="t" style="left:1251.6px;top:1625px;font-size:21.50px;line-height:24px;color:#ececec;transform:scaleX(0.9227);-webkit-text-stroke:0.34px #ececec;">42°41'44"K 050°01'21"D</span>
<span class="t" style="left:1509.4px;top:1627px;font-size:21.50px;line-height:24px;color:#ececec;transform:scaleX(0.9033);-webkit-text-stroke:0.34px #ececec;">1000</span>
<span class="t" style="left:1752.8px;top:1625px;font-size:21.50px;line-height:24px;color:#ececec;transform:scaleX(0.9030);-webkit-text-stroke:0.34px #ececec;">Label</span>
<span class="t" style="left:1959.5px;top:1627px;font-size:21.50px;line-height:24px;color:#ececec;transform:scaleX(0.9030);-webkit-text-stroke:0.34px #ececec;">Label</span>
<span class="t" style="left:2166.2px;top:1627px;font-size:21.50px;line-height:24px;color:#ececec;transform:scaleX(0.9030);-webkit-text-stroke:0.34px #ececec;">Label</span>
<div class="b" style="left:414.1px;top:1679.6px;width:25.6px;height:25.1px;border-radius:6.5px;border:2.6px solid #e8e8e8;"></div>
<div class="b" style="left:881.3px;top:1682.5px;width:19.8px;height:19.8px;background:#3dba7d;border-radius:10.0px;"></div>
<span class="t" style="left:459.7px;top:1678px;font-size:21.50px;line-height:24px;color:#ececec;transform:scaleX(0.8893);-webkit-text-stroke:0.34px #ececec;">Name</span>
<span class="t" style="left:644.9px;top:1681px;font-size:21.50px;line-height:24px;color:#ececec;transform:scaleX(0.9030);-webkit-text-stroke:0.34px #ececec;">Label</span>
<span class="t" style="left:1040.3px;top:1678px;font-size:21.50px;line-height:24px;color:#ececec;transform:scaleX(0.9030);-webkit-text-stroke:0.34px #ececec;">Label</span>
<span class="t" style="left:1251.6px;top:1678px;font-size:21.50px;line-height:24px;color:#ececec;transform:scaleX(0.9227);-webkit-text-stroke:0.34px #ececec;">42°41'44"K 050°01'21"D</span>
<span class="t" style="left:1509.4px;top:1681px;font-size:21.50px;line-height:24px;color:#ececec;transform:scaleX(0.9033);-webkit-text-stroke:0.34px #ececec;">1000</span>
<span class="t" style="left:1752.8px;top:1678px;font-size:21.50px;line-height:24px;color:#ececec;transform:scaleX(0.9030);-webkit-text-stroke:0.34px #ececec;">Label</span>
<span class="t" style="left:1959.5px;top:1681px;font-size:21.50px;line-height:24px;color:#ececec;transform:scaleX(0.9030);-webkit-text-stroke:0.34px #ececec;">Label</span>
<span class="t" style="left:2166.2px;top:1681px;font-size:21.50px;line-height:24px;color:#ececec;transform:scaleX(0.9030);-webkit-text-stroke:0.34px #ececec;">Label</span>
<div class="b" style="left:414.1px;top:1732.7px;width:25.9px;height:25.7px;background:#3d94e8;border-radius:7.0px;"></div>
<svg class="b" style="left:414.1px;top:1732.7px;" width="26.0" height="26.0" viewBox="0 0 26 26"><path d="M5.8,13.2 L10.6,17.6 L20,8.4" fill="none" stroke="#0b2543" stroke-width="2.7"/></svg>
<div class="b" style="left:881.3px;top:1738.7px;width:19.8px;height:19.8px;background:#3dba7d;border-radius:10.0px;"></div>
<span class="t" style="left:459.7px;top:1737px;font-size:21.50px;line-height:24px;color:#f4f4f4;font-weight:700;transform:scaleX(0.8880);-webkit-text-stroke:0.73px #f4f4f4;">Name</span>
<span class="t" style="left:644.9px;top:1737px;font-size:21.50px;line-height:24px;color:#f4f4f4;font-weight:700;transform:scaleX(0.8727);-webkit-text-stroke:0.73px #f4f4f4;">Label</span>
<span class="t" style="left:1040.3px;top:1737px;font-size:21.50px;line-height:24px;color:#f4f4f4;font-weight:700;transform:scaleX(0.8727);-webkit-text-stroke:0.73px #f4f4f4;">Label</span>
<span class="t" style="left:1251.6px;top:1737px;font-size:21.50px;line-height:24px;color:#f4f4f4;font-weight:700;transform:scaleX(0.9115);-webkit-text-stroke:0.73px #f4f4f4;">42°41'44"K 050°01'21"D</span>
<span class="t" style="left:1509.4px;top:1737px;font-size:21.50px;line-height:24px;color:#f4f4f4;font-weight:700;transform:scaleX(0.9368);-webkit-text-stroke:0.73px #f4f4f4;">1000</span>
<span class="t" style="left:1752.8px;top:1737px;font-size:21.50px;line-height:24px;color:#f4f4f4;font-weight:700;transform:scaleX(0.8727);-webkit-text-stroke:0.73px #f4f4f4;">Label</span>
<span class="t" style="left:1959.5px;top:1737px;font-size:21.50px;line-height:24px;color:#f4f4f4;font-weight:700;transform:scaleX(0.8727);-webkit-text-stroke:0.73px #f4f4f4;">Label</span>
<span class="t" style="left:2166.2px;top:1737px;font-size:21.50px;line-height:24px;color:#f4f4f4;font-weight:700;transform:scaleX(0.8727);-webkit-text-stroke:0.73px #f4f4f4;">Label</span>
<div class="b" style="left:414.1px;top:1786.5px;width:25.6px;height:25.1px;border-radius:6.5px;border:2.6px solid #e8e8e8;"></div>
<div class="b" style="left:881.3px;top:1788.9px;width:19.8px;height:19.8px;background:#3dba7d;border-radius:10.0px;"></div>
<span class="t" style="left:459.7px;top:1784px;font-size:21.50px;line-height:24px;color:#ececec;transform:scaleX(0.8893);-webkit-text-stroke:0.34px #ececec;">Name</span>
<span class="t" style="left:644.9px;top:1787px;font-size:21.50px;line-height:24px;color:#ececec;transform:scaleX(0.9030);-webkit-text-stroke:0.34px #ececec;">Label</span>
<span class="t" style="left:1040.3px;top:1784px;font-size:21.50px;line-height:24px;color:#ececec;transform:scaleX(0.9030);-webkit-text-stroke:0.34px #ececec;">Label</span>
<span class="t" style="left:1251.6px;top:1784px;font-size:21.50px;line-height:24px;color:#ececec;transform:scaleX(0.9227);-webkit-text-stroke:0.34px #ececec;">42°41'44"K 050°01'21"D</span>
<span class="t" style="left:1509.4px;top:1787px;font-size:21.50px;line-height:24px;color:#ececec;transform:scaleX(0.9033);-webkit-text-stroke:0.34px #ececec;">1000</span>
<span class="t" style="left:1752.8px;top:1784px;font-size:21.50px;line-height:24px;color:#ececec;transform:scaleX(0.9030);-webkit-text-stroke:0.34px #ececec;">Label</span>
<span class="t" style="left:1959.5px;top:1787px;font-size:21.50px;line-height:24px;color:#ececec;transform:scaleX(0.9030);-webkit-text-stroke:0.34px #ececec;">Label</span>
<span class="t" style="left:2166.2px;top:1787px;font-size:21.50px;line-height:24px;color:#ececec;transform:scaleX(0.9030);-webkit-text-stroke:0.34px #ececec;">Label</span>
<div class="b" style="left:372.0px;top:1878.2px;width:3110.0px;height:80.0px;background:#0a0c0d;"></div>
<div class="b" style="left:372.0px;top:1878.2px;width:3110.0px;height:3.0px;background:#3a3c3d;"></div>
<div class="b" style="left:559.2px;top:1881.2px;width:2.6px;height:71.0px;background:#1c1f21;"></div>
<div class="b" style="left:685.7px;top:1881.2px;width:2.6px;height:71.0px;background:#1c1f21;"></div>
<div class="b" style="left:798.7px;top:1881.2px;width:2.6px;height:71.0px;background:#1c1f21;"></div>
<div class="b" style="left:386.5px;top:1892.6px;width:64.5px;height:50.8px;background:#1b1c1d;border-radius:8.0px;"></div>
<svg class="b" style="left:380.0px;top:1884.0px;" width="500.0" height="66.0" viewBox="380 1884 500 66"><path d="M412.42,1932.26 A9.00,9.00 0 1 1 411.33,1914.27 A8.18,8.18 0 1 1 427.28,1914.27 A8.72,8.72 0 1 1 425.71,1932.13" fill="none" stroke="#e6e6e6" stroke-width="3.2" stroke-linecap="round"/><circle cx="409" cy="1907.4" r="8.3" fill="#2a1517"/><circle cx="409" cy="1907.4" r="7.2" fill="#ff7a7e"/><circle cx="607.6" cy="1908.0" r="4.1" fill="none" stroke="#e6e6e6" stroke-width="2.8"/><circle cx="597.3" cy="1924.7" r="4.1" fill="none" stroke="#e6e6e6" stroke-width="2.8"/><circle cx="617.1" cy="1924.7" r="4.1" fill="none" stroke="#e6e6e6" stroke-width="2.8"/><path d="M726.2,1902.8 H740.2 V1915.2 C740.2,1916.2 739.8,1916.8 739,1917.2 L733.2,1920.2 L727.4,1917.2 C726.6,1916.8 726.2,1916.2 726.2,1915.2 Z" fill="#e6e6e6"/><rect x="732" y="1905.4" width="2.5" height="7.2" fill="#0a0c0d"/><rect x="732" y="1914" width="2.5" height="2.4" fill="#0a0c0d"/><path d="M733.20,1920.60 L734.55,1924.34 L738.53,1924.47 L735.39,1926.91 L736.49,1930.73 L733.20,1928.50 L729.91,1930.73 L731.01,1926.91 L727.87,1924.47 L731.85,1924.34Z" fill="#e6e6e6"/><circle cx="845.9" cy="1916.6" r="14" fill="none" stroke="#e6e6e6" stroke-width="3"/><path d="M845.90,1908.50 L847.96,1914.07 L853.89,1914.30 L849.23,1917.98 L850.84,1923.70 L845.90,1920.40 L840.96,1923.70 L842.57,1917.98 L837.91,1914.30 L843.84,1914.07Z" fill="#e6e6e6"/></svg>
<span class="t" style="left:461.5px;top:1905px;font-size:25.00px;line-height:28px;color:#e6e6e6;transform:scaleX(0.8847);-webkit-text-stroke:0.40px #e6e6e6;">100000</span>
<span class="t" style="left:633.9px;top:1905px;font-size:25.00px;line-height:28px;color:#e6e6e6;transform:scaleX(0.8775);-webkit-text-stroke:0.40px #e6e6e6;">25</span>
<span class="t" style="left:760.4px;top:1905px;font-size:25.00px;line-height:28px;color:#e6e6e6;transform:scaleX(0.7625);-webkit-text-stroke:0.40px #e6e6e6;">6</span>
<span class="t" style="left:873.3px;top:1905px;font-size:25.00px;line-height:28px;color:#e6e6e6;transform:scaleX(0.9410);-webkit-text-stroke:0.40px #e6e6e6;">2/5</span>
<div class="b" style="left:2037.0px;top:1881.2px;width:139.9px;height:71.0px;background:#171819;border-radius:0 10px 10px 0;"></div>
<div class="b" style="left:1036.6px;top:1884.0px;width:1005.2px;height:65.2px;background:#2a2a2a;border-radius:9.0px;"></div>
<div class="b" style="left:1036.6px;top:1884.0px;width:13.6px;height:65.2px;background:#fd5b62;border-radius:9px 0 0 9px;"></div>
<span class="t" style="left:1075.7px;top:1904px;font-size:23.00px;line-height:26px;color:#ececec;font-weight:700;transform:scaleX(0.8112);-webkit-text-stroke:0.78px #ececec;">An important Error!</span>
<span class="t" style="left:1728.8px;top:1904px;font-size:22.00px;line-height:25px;color:#dedede;transform:scaleX(0.7921);-webkit-text-stroke:0.35px #dedede;">26/07/2023 - 20:22</span>
<div class="b" style="left:1708.3px;top:1897.5px;width:2.0px;height:38.2px;background:#1c1c1c;"></div>
<div class="b" style="left:1893.4px;top:1897.5px;width:2.0px;height:38.2px;background:#1c1c1c;"></div>
<div class="b" style="left:1958.3px;top:1897.5px;width:2.0px;height:38.2px;background:#1c1c1c;"></div>
<svg class="b" style="left:1900.0px;top:1884.0px;" width="300.0" height="66.0" viewBox="1900 1884 300 66"><path d="M1926.1,1906.4 C1927,1906.4 1927.6,1907 1927.6,1907.9 V1908.6 C1930.6,1909.4 1932.2,1912 1932.2,1915.2 V1920.6 L1934.4,1922.8 V1923.8 H1917.8 V1922.8 L1920,1920.6 V1915.2 C1920,1912 1921.6,1909.4 1924.6,1908.6 V1907.9 C1924.6,1907 1925.2,1906.4 1926.1,1906.4 Z" fill="#d2d2d2"/><path d="M1924,1924.8 H1928.2 C1928.2,1926 1927.3,1926.9 1926.1,1926.9 C1924.9,1926.9 1924,1926 1924,1924.8 Z" fill="#d2d2d2"/><path d="M1916.6,1906.2 L1935.8,1925.8" stroke="#2a2a2a" stroke-width="5"/><path d="M1917.4,1907 L1935,1925" stroke="#d2d2d2" stroke-width="2" stroke-linecap="round"/><circle cx="1991.5" cy="1917.8" r="7.4" fill="none" stroke="#d2d2d2" stroke-width="2.2"/><circle cx="1991.5" cy="1917.8" r="2.9" fill="none" stroke="#d2d2d2" stroke-width="2"/><path d="M1991.5,1907.2 V1910.4 M1991.5,1925.2 V1928.4 M1980.9,1917.8 H1984.1 M1998.9,1917.8 H2002.1" stroke="#d2d2d2" stroke-width="2.2"/><path d="M2136.4,1922.6 L2144.8,1914.4 L2153.2,1922.6" fill="none" stroke="#f0f0f0" stroke-width="3"/><circle cx="2121.9" cy="1906.8" r="7.6" fill="#3dba7d" stroke="#171819" stroke-width="1.6"/></svg>
<span class="t" style="left:2087.0px;top:1904px;font-size:24.20px;line-height:27px;color:#f4f4f4;font-weight:700;transform:scaleX(0.8511);-webkit-text-stroke:0.82px #f4f4f4;z-index:0;">(+4)</span>
<svg class="b" style="left:2110.0px;top:1896.0px;" width="24.0" height="24.0" viewBox="0 0 24 24"><circle cx="11.9" cy="10.8" r="7.6" fill="#3dba7d" stroke="#171819" stroke-width="1.6"/></svg>
<span class="t" style="left:2305.0px;top:1905px;font-size:24.20px;line-height:27px;color:#f0f0f0;font-weight:700;transform:scaleX(1.1262);-webkit-text-stroke:0.82px #f0f0f0;">41°18'</span>
</div></div>
<div class="b" style="left:2363.8px;top:1161.9px;width:1371.8px;height:892.9px;background:#0a0d0e;border:2px solid #565c60;border-radius:7px;overflow:hidden;">
<div class="b" style="left:-2365.8px;top:-1163.9px;width:3840px;height:2160px;">
<div class="b" style="left:2364.0px;top:1162.0px;width:1380.0px;height:41.7px;background:#1a1a1a;"></div>
<div class="b" style="left:2364.0px;top:1203.7px;width:318.0px;height:779.1px;background:linear-gradient(90deg,#0f0f0f 0,#0f0f0f 296px,#0a0d0e 318px);"></div>
<div class="b" style="left:2364.0px;top:1982.8px;width:1380.0px;height:80.0px;background:#1a1a1a;"></div>
<span class="t" style="left:2381.9px;top:1176px;font-size:15.90px;line-height:17px;color:#f2f2f2;font-weight:700;transform:scaleX(0.7907);-webkit-text-stroke:0.54px #f2f2f2;">LABEL</span>
<svg class="b" style="left:3610.0px;top:1170.0px;" width="115.0" height="28.0" viewBox="3610 1170 115 28"><path d="M3619.4,1190 L3631.6,1177.8 M3626.2,1177.6 H3631.8 V1183.2 M3619.2,1184.6 V1190.2 H3624.8" fill="none" stroke="#e2e2e2" stroke-width="1.7"/><path d="M3653.5,1176 V1191.8 M3645.6,1183.9 H3661.4 M3650.6,1178.8 L3653.5,1175.9 L3656.4,1178.8 M3650.6,1189 L3653.5,1191.9 L3656.4,1189 M3648.5,1181 L3645.6,1183.9 L3648.5,1186.8 M3658.5,1181 L3661.4,1183.9 L3658.5,1186.8" fill="none" stroke="#e2e2e2" stroke-width="1.7"/><path d="M3680.9,1176.4 V1190.6 M3674.2,1184.2 L3680.9,1190.9 L3687.6,1184.2" fill="none" stroke="#e2e2e2" stroke-width="1.8"/><path d="M3702.2,1177.6 L3714.8,1190.2 M3714.8,1177.6 L3702.2,1190.2" fill="none" stroke="#e2e2e2" stroke-width="1.9"/></svg>
<div class="b" style="left:2381.4px;top:1219.1px;width:213.5px;height:31.0px;background:#1c1c1c;border-radius:6.0px;"></div>
<div class="b" style="left:2602.7px;top:1219.1px;width:45.3px;height:31.0px;background:#1c1c1c;border-radius:6.0px;"></div>
<div class="b" style="left:2381.4px;top:1266.3px;width:266.6px;height:30.8px;background:#1c1c1c;border-radius:6.0px;"></div>
<svg class="b" style="left:2380.0px;top:1215.0px;" width="270.0" height="85.0" viewBox="2380 1215 270 85"><circle cx="2395.4" cy="1233.2" r="3.9" fill="none" stroke="#d8d8d8" stroke-width="1.6"/><path d="M2398.3,1236.1 L2402.1,1239.9" stroke="#d8d8d8" stroke-width="1.7" stroke-linecap="round"/><path d="M2625.1,1227.6 V1241.4 M2618.2,1234.5 H2632" stroke="#e0e0e0" stroke-width="1.7"/><circle cx="2397" cy="1281.7" r="7" fill="none" stroke="#e4e4e4" stroke-width="1.8"/></svg>
<span class="t" style="left:2413.2px;top:1226px;font-size:13.25px;line-height:15px;color:#bdbdbd;transform:scaleX(0.8223);-webkit-text-stroke:0.21px #bdbdbd;">Search...</span>
<span class="t" style="left:2421.0px;top:1273px;font-size:15.25px;line-height:17px;color:#d6d6d6;transform:scaleX(0.7916);-webkit-text-stroke:0.24px #d6d6d6;">Alternative 1</span>
<div class="b" style="left:2679.0px;top:1219.1px;width:1039.3px;height:38.8px;background:#171818;border-radius:8.0px;"></div>
<span class="t" style="left:2691.3px;top:1232px;font-size:15.90px;line-height:17px;color:#f2f2f2;font-weight:700;transform:scaleX(0.8383);-webkit-text-stroke:0.54px #f2f2f2;">Alternative 1</span>
<div class="b" style="left:3564.6px;top:1225.2px;width:1.6px;height:26.0px;background:#343434;"></div>
<span class="t" style="left:3577.2px;top:1230px;font-size:15.25px;line-height:17px;color:#d8d8d8;transform:scaleX(0.8306);-webkit-text-stroke:0.24px #d8d8d8;">Make Operative</span>
<div class="b" style="left:3682.8px;top:1233.1px;width:25.7px;height:11.7px;background:#1a2735;border-radius:6.0px;"></div>
<svg class="b" style="left:3676.0px;top:1229.0px;" width="20.0" height="20.0" viewBox="0 0 20 20"><circle cx="9.6" cy="9.7" r="8.9" fill="#f4f4f4"/><rect x="6.2" y="8.6" width="6.8" height="5.4" rx="0.9" fill="#111"/><path d="M7.6,8.8 V7.4 A2,2 0 0 1 11.6,7.4 V8.8" fill="none" stroke="#111" stroke-width="1.2"/><circle cx="9.6" cy="11.3" r="0.9" fill="#f4f4f4"/></svg>
<span class="t" style="left:2679.3px;top:1285px;font-size:12.50px;line-height:14px;color:#e8e8e8;font-weight:700;transform:scaleX(0.9023);-webkit-text-stroke:0.43px #e8e8e8;">Files</span>
<svg class="b" style="left:2735.0px;top:1283.0px;" width="18.0" height="18.0" viewBox="0 0 18 18"><path d="M2.9,2.5 L14.9,14.5 M14.9,2.5 L2.9,14.5" stroke="#ee6a70" stroke-width="1.4"/></svg>
<span class="t" style="left:2679.3px;top:1306px;font-size:15.50px;line-height:17px;color:#f2f2f2;font-weight:700;transform:scaleX(0.7462);-webkit-text-stroke:0.53px #f2f2f2;">FILE 1</span>
<div class="b" style="left:2679.3px;top:1331.6px;width:494.0px;height:1.5px;background:#c2c2c2;"></div>
<svg class="b" style="left:3150.0px;top:1308.0px;" width="20.0" height="14.0" viewBox="0 0 20 14"><path d="M3.4,3.2 L9.3,9.4 L15.2,3.2" fill="none" stroke="#e2e2e2" stroke-width="1.8"/></svg>
<span class="t" style="left:3223.9px;top:1285px;font-size:12.50px;line-height:14px;color:#e8e8e8;font-weight:700;transform:scaleX(0.9188);-webkit-text-stroke:0.43px #e8e8e8;">Objective</span>
<span class="t" style="left:3223.9px;top:1306px;font-size:15.25px;line-height:17px;color:#b8b8b8;transform:scaleX(0.7803);-webkit-text-stroke:0.24px #b8b8b8;">Enter...</span>
<span class="t" style="left:3686.2px;top:1309px;font-size:13.00px;line-height:15px;color:#c8c8c8;transform:scaleX(0.9724);-webkit-text-stroke:0.21px #c8c8c8;">0/52</span>
<div class="b" style="left:3223.9px;top:1331.6px;width:494.4px;height:1.5px;background:#c2c2c2;"></div>
<div class="b" style="left:2679.0px;top:1356.6px;width:1039.3px;height:559.6px;background:#1a1a1a;border-radius:10.0px;"></div>
<div class="b" style="left:2681.2px;top:1395.7px;width:1035.2px;height:520.0px;background:#0a0d0e;border-radius:10.0px;border:1.6px solid #141a1c;"></div>
<svg class="b" style="left:2694.0px;top:1370.0px;" width="18.0" height="14.0" viewBox="0 0 18 14"><path d="M3,3.4 H14.8 L9.4,9.8 Z" fill="#3d94e8" stroke="#3d94e8" stroke-width="1.6" stroke-linejoin="round"/></svg>
<span class="t" style="left:2714.5px;top:1369px;font-size:15.50px;line-height:17px;color:#f2f2f2;font-weight:700;transform:scaleX(0.7999);-webkit-text-stroke:0.53px #f2f2f2;">FILE 1</span>
<div class="b" style="left:2693.0px;top:1407.5px;width:1010.8px;height:38.0px;background:#0a0d0e;border-radius:6.0px;border:2px solid #3b4145;"></div>
<div class="b" style="left:3029.0px;top:1408.0px;width:2.0px;height:37.0px;background:#3b4145;"></div>
<div class="b" style="left:3367.4px;top:1409.4px;width:334.9px;height:34.2px;background:#3d94e8;border-radius:0 4px 4px 0;"></div>
<span class="t" style="left:2838.0px;top:1420px;font-size:15.25px;line-height:17px;color:#ececec;font-weight:700;transform:scaleX(0.7516);-webkit-text-stroke:0.52px #ececec;">HEADER</span>
<span class="t" style="left:3175.3px;top:1420px;font-size:15.25px;line-height:17px;color:#ececec;font-weight:700;transform:scaleX(0.7516);-webkit-text-stroke:0.52px #ececec;">HEADER</span>
<span class="t" style="left:3510.4px;top:1420px;font-size:15.25px;line-height:17px;color:#0b2543;font-weight:700;transform:scaleX(0.7547);-webkit-text-stroke:0.52px #0b2543;">HEADER</span>
<div class="b" style="left:2694.4px;top:1488.4px;width:1008.5px;height:2.0px;background:#4a4f53;"></div>
<div class="b" style="left:2694.4px;top:1487.6px;width:110.9px;height:3.0px;background:#3d94e8;"></div>
<span class="t" style="left:2732.7px;top:1464px;font-size:15.25px;line-height:17px;color:#3d94e8;font-weight:700;transform:scaleX(0.8035);-webkit-text-stroke:0.52px #3d94e8;">Label</span>
<span class="t" style="left:2843.1px;top:1464px;font-size:15.25px;line-height:17px;color:#d8d8d8;transform:scaleX(0.8255);-webkit-text-stroke:0.24px #d8d8d8;">Label</span>
<span class="t" style="left:2961.4px;top:1464px;font-size:15.25px;line-height:17px;color:#d8d8d8;transform:scaleX(0.8255);-webkit-text-stroke:0.24px #d8d8d8;">Label</span>
<span class="t" style="left:3091.3px;top:1464px;font-size:15.25px;line-height:17px;color:#d8d8d8;transform:scaleX(0.8255);-webkit-text-stroke:0.24px #d8d8d8;">Label</span>
<span class="t" style="left:3196.2px;top:1464px;font-size:15.25px;line-height:17px;color:#d8d8d8;transform:scaleX(0.8255);-webkit-text-stroke:0.24px #d8d8d8;">Label</span>
<svg class="b" style="left:3606.0px;top:1500.0px;" width="18.0" height="18.0" viewBox="0 0 18 18"><path d="M3.2,3 L7.6,8.6 L3.2,14.2 M8.4,3 L12.8,8.6 L8.4,14.2" fill="none" stroke="#e0e0e0" stroke-width="1.5"/></svg>
<span class="t" style="left:3626.1px;top:1499px;font-size:15.25px;line-height:17px;color:#f4f4f4;font-weight:700;transform:scaleX(0.7972);-webkit-text-stroke:0.52px #f4f4f4;">Graphic View</span>
<span class="t" style="left:2695.1px;top:1543px;font-size:12.50px;line-height:14px;color:#e8e8e8;font-weight:700;transform:scaleX(0.9386);-webkit-text-stroke:0.43px #e8e8e8;">All Items</span>
<span class="t" style="left:3255.7px;top:1543px;font-size:12.50px;line-height:14px;color:#e8e8e8;font-weight:700;transform:scaleX(0.9322);-webkit-text-stroke:0.43px #e8e8e8;">Selected Items</span>
<div class="b" style="left:2910.5px;top:1527.0px;width:231.2px;height:30.7px;background:#1c1c1c;border-radius:6.0px;"></div>
<svg class="b" style="left:2916.0px;top:1532.0px;" width="20.0" height="20.0" viewBox="0 0 20 20"><circle cx="8.3" cy="8.7" r="3.9" fill="none" stroke="#d8d8d8" stroke-width="1.6"/><path d="M11.2,11.6 L15.0,15.4" stroke="#d8d8d8" stroke-width="1.7" stroke-linecap="round"/></svg>
<span class="t" style="left:2941.8px;top:1535px;font-size:13.25px;line-height:15px;color:#bdbdbd;transform:scaleX(0.7808);-webkit-text-stroke:0.21px #bdbdbd;">Search...</span>
<div class="b" style="left:2695.1px;top:1570.0px;width:446.6px;height:30.7px;background:#1e1e1e;border-radius:6.0px;"></div>
<div class="b" style="left:2702.9px;top:1577.8px;width:15.4px;height:15.4px;border-radius:4.2px;border:1.8px solid #dcdcdc;"></div>
<span class="t" style="left:2726.6px;top:1578px;font-size:13.25px;line-height:15px;color:#cfcfcf;transform:scaleX(0.9248);-webkit-text-stroke:0.21px #cfcfcf;">Select All</span>
<div class="b" style="left:2695.1px;top:1603.3px;width:446.6px;height:30.7px;background:#1e1e1e;border-radius:6.0px;"></div>
<div class="b" style="left:2702.9px;top:1611.1px;width:15.4px;height:15.4px;border-radius:4.2px;border:1.8px solid #dcdcdc;"></div>
<span class="t" style="left:2726.6px;top:1612px;font-size:13.25px;line-height:15px;color:#cfcfcf;transform:scaleX(0.9126);-webkit-text-stroke:0.21px #cfcfcf;">Item 2</span>
<div class="b" style="left:2695.1px;top:1636.7px;width:446.6px;height:30.7px;background:#1e1e1e;border-radius:6.0px;"></div>
<div class="b" style="left:2702.9px;top:1644.5px;width:15.4px;height:15.4px;border-radius:4.2px;border:1.8px solid #dcdcdc;"></div>
<span class="t" style="left:2726.6px;top:1645px;font-size:13.25px;line-height:15px;color:#cfcfcf;transform:scaleX(0.9126);-webkit-text-stroke:0.21px #cfcfcf;">Item 7</span>
<div class="b" style="left:2695.1px;top:1670.0px;width:446.6px;height:30.7px;background:#1e1e1e;border-radius:6.0px;"></div>
<div class="b" style="left:2702.9px;top:1677.8px;width:15.4px;height:15.4px;border-radius:4.2px;border:1.8px solid #dcdcdc;"></div>
<span class="t" style="left:2726.6px;top:1678px;font-size:13.25px;line-height:15px;color:#cfcfcf;transform:scaleX(0.9126);-webkit-text-stroke:0.21px #cfcfcf;">Item 8</span>
<div class="b" style="left:2695.1px;top:1703.4px;width:446.6px;height:30.7px;background:#1e1e1e;border-radius:6.0px;"></div>
<div class="b" style="left:2702.9px;top:1711.2px;width:15.4px;height:15.4px;border-radius:4.2px;border:1.8px solid #dcdcdc;"></div>
<span class="t" style="left:2726.6px;top:1712px;font-size:13.25px;line-height:15px;color:#cfcfcf;transform:scaleX(0.9126);-webkit-text-stroke:0.21px #cfcfcf;">Item 9</span>
<div class="b" style="left:2695.1px;top:1736.7px;width:446.6px;height:30.7px;background:#1e1e1e;border-radius:6.0px;"></div>
<div class="b" style="left:2702.9px;top:1744.5px;width:15.4px;height:15.4px;border-radius:4.2px;border:1.8px solid #dcdcdc;"></div>
<span class="t" style="left:2726.6px;top:1745px;font-size:13.25px;line-height:15px;color:#cfcfcf;transform:scaleX(0.9166);-webkit-text-stroke:0.21px #cfcfcf;">Item 10</span>
<div class="b" style="left:2695.1px;top:1770.0px;width:446.6px;height:30.7px;background:#1e1e1e;border-radius:6.0px;"></div>
<div class="b" style="left:2702.9px;top:1777.8px;width:15.4px;height:15.4px;border-radius:4.2px;border:1.8px solid #dcdcdc;"></div>
<span class="t" style="left:2726.6px;top:1778px;font-size:13.25px;line-height:15px;color:#cfcfcf;transform:scaleX(0.9166);-webkit-text-stroke:0.21px #cfcfcf;">Item 11</span>
<div class="b" style="left:2695.1px;top:1803.4px;width:446.6px;height:30.7px;background:#1e1e1e;border-radius:6.0px;"></div>
<div class="b" style="left:2702.9px;top:1811.2px;width:15.4px;height:15.4px;border-radius:4.2px;border:1.8px solid #dcdcdc;"></div>
<span class="t" style="left:2726.6px;top:1812px;font-size:13.25px;line-height:15px;color:#cfcfcf;transform:scaleX(0.9166);-webkit-text-stroke:0.21px #cfcfcf;">Item 12</span>
<div class="b" style="left:2695.1px;top:1836.7px;width:446.6px;height:30.7px;background:#1e1e1e;border-radius:6.0px;"></div>
<div class="b" style="left:2702.9px;top:1844.5px;width:15.4px;height:15.4px;border-radius:4.2px;border:1.8px solid #dcdcdc;"></div>
<span class="t" style="left:2726.6px;top:1845px;font-size:13.25px;line-height:15px;color:#cfcfcf;transform:scaleX(0.9166);-webkit-text-stroke:0.21px #cfcfcf;">Item 13</span>
<div class="b" style="left:2695.1px;top:1870.1px;width:446.6px;height:30.7px;background:#1e1e1e;border-radius:6.0px;"></div>
<div class="b" style="left:2702.9px;top:1877.9px;width:15.4px;height:15.4px;border-radius:4.2px;border:1.8px solid #dcdcdc;"></div>
<span class="t" style="left:2726.6px;top:1878px;font-size:13.25px;line-height:15px;color:#cfcfcf;transform:scaleX(0.9234);-webkit-text-stroke:0.21px #cfcfcf;">Item 14</span>
<div class="b" style="left:3145.9px;top:1570.0px;width:7.0px;height:331.0px;background:#161717;border-radius:2.0px;"></div>
<div class="b" style="left:3147.2px;top:1570.8px;width:4.6px;height:35.0px;background:#2b2c2d;border-radius:2.0px;"></div>
<div class="b" style="left:3173.2px;top:1616.1px;width:50.4px;height:50.4px;background:#1e1e1e;border-radius:26.0px;"></div>
<div class="b" style="left:3173.2px;top:1679.0px;width:50.4px;height:50.4px;background:#1e1e1e;border-radius:26.0px;"></div>
<div class="b" style="left:3173.2px;top:1741.6px;width:50.4px;height:50.4px;background:#1e1e1e;border-radius:26.0px;"></div>
<div class="b" style="left:3173.2px;top:1804.2px;width:50.4px;height:50.4px;background:#1e1e1e;border-radius:26.0px;"></div>
<svg class="b" style="left:3170.0px;top:1610.0px;" width="60.0" height="250.0" viewBox="3170 1610 60 250"><path d="M3188.4,1630.9 l8.4,10.4 l-8.4,10.4 M3199.6,1630.9 l8.4,10.4 l-8.4,10.4" fill="none" stroke="#3d94e8" stroke-width="2.2"/><path d="M3193.4,1693.6 l10.6,10.6 l-10.6,10.6" fill="none" stroke="#6b7177" stroke-width="2.2"/><path d="M3204.0,1756.2 l-10.6,10.6 l10.6,10.6" fill="none" stroke="#6b7177" stroke-width="2.2"/><path d="M3197.8,1819.0 l-8.4,10.4 l8.4,10.4 M3209.0,1819.0 l-8.4,10.4 l8.4,10.4" fill="none" stroke="#6b7177" stroke-width="2.2"/></svg>
<div class="b" style="left:3493.6px;top:1710.9px;width:23.4px;height:23.4px;background:#e2e2e2;border-radius:12.0px;"></div>
<div class="b" style="left:3504.4px;top:1720.6px;width:1.9px;height:7.6px;background:#1a1a1a;"></div>
<div class="b" style="left:3504.3px;top:1716.6px;width:2.1px;height:2.2px;background:#1a1a1a;border-radius:1.0px;"></div>
<span class="t" style="left:3453.1px;top:1747px;font-size:15.25px;line-height:17px;color:#c8c8c8;transform:scaleX(0.8020);-webkit-text-stroke:0.24px #c8c8c8;">No items selected.</span>
<span class="t" style="left:3410.9px;top:2010px;font-size:16.50px;line-height:18px;color:#e2e2e2;transform:scaleX(0.8158);-webkit-text-stroke:0.26px #e2e2e2;">Cancel</span>
<div class="b" style="left:3477.4px;top:1999.6px;width:81.6px;height:38.2px;background:#1b1b1b;border-radius:8.0px;border:2.2px solid #f2f2f2;"></div>
<span class="t" style="left:3501.2px;top:2010px;font-size:16.50px;line-height:18px;color:#f2f2f2;transform:scaleX(0.8262);-webkit-text-stroke:0.49px #f2f2f2;">Apply</span>
<div class="b" style="left:3575.2px;top:1999.6px;width:143.1px;height:38.2px;background:#3d94e8;border-radius:8.0px;"></div>
<span class="t" style="left:3599.0px;top:2011px;font-size:16.50px;line-height:18px;color:#0b2543;font-weight:700;transform:scaleX(0.7789);-webkit-text-stroke:0.56px #0b2543;">Save and Close</span>
</div></div>
</body></html>
